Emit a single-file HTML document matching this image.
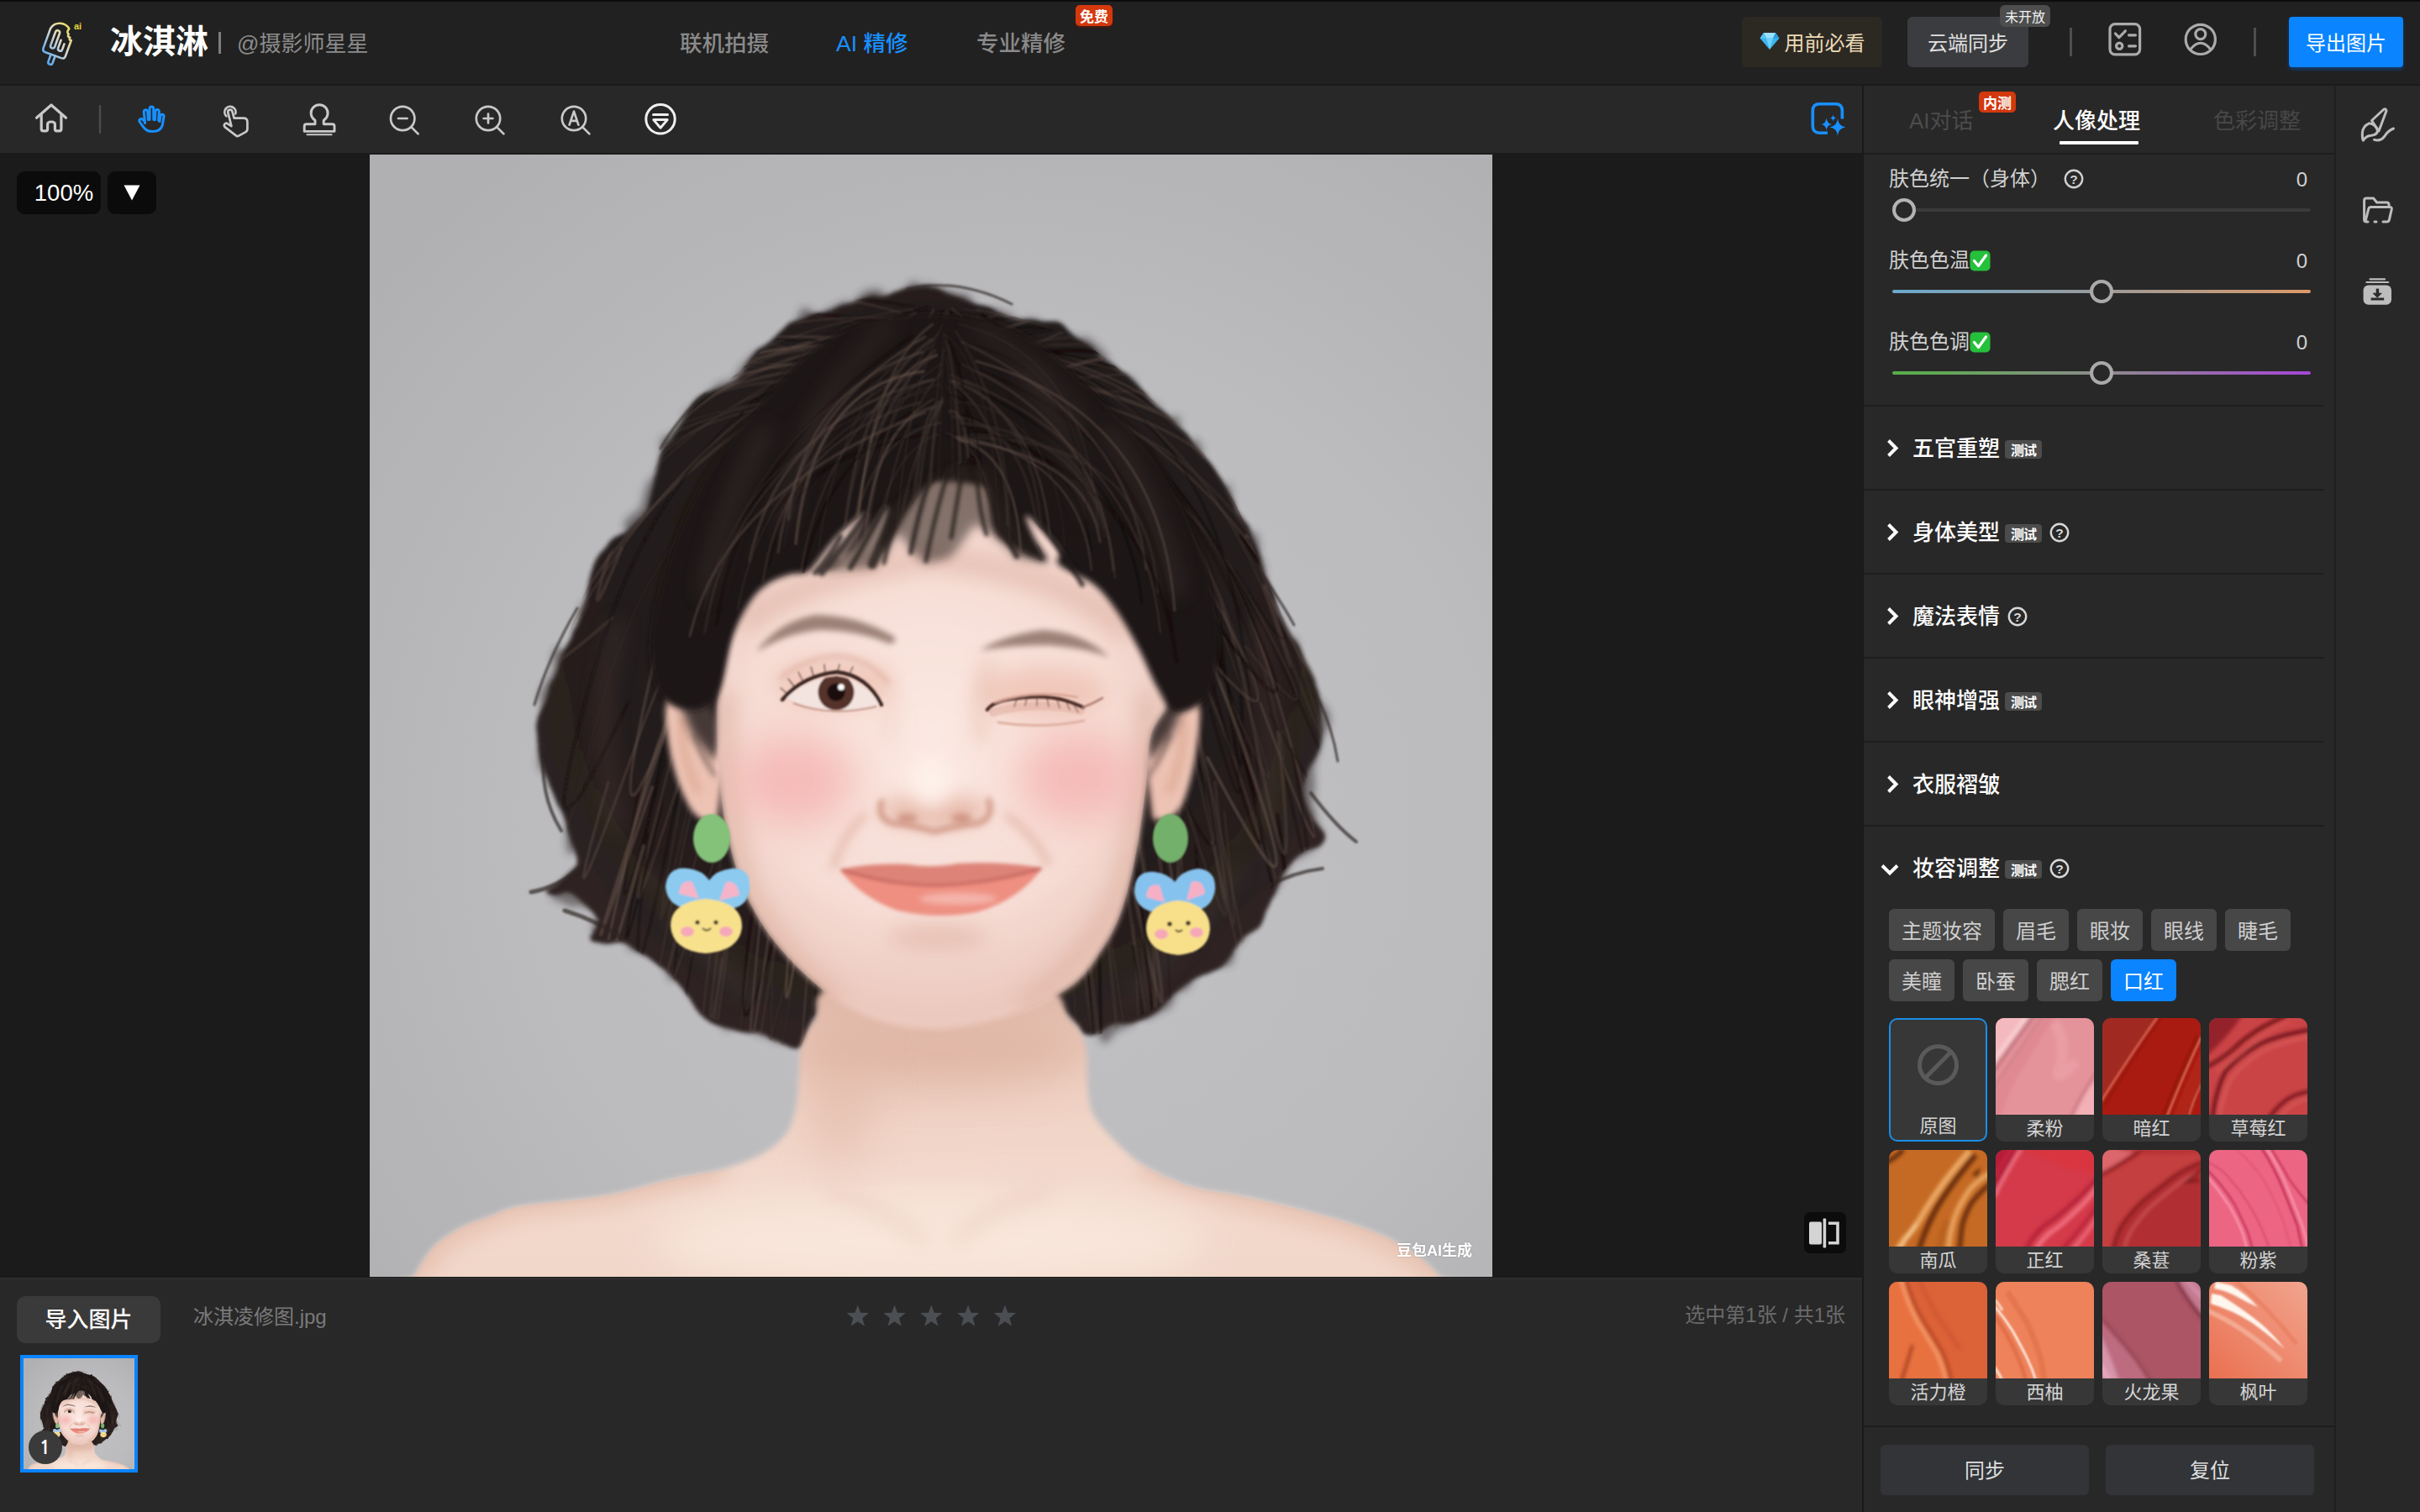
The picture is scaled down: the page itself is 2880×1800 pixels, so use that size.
<!DOCTYPE html>
<html lang="zh-CN">
<head>
<meta charset="utf-8">
<title>冰淇淋 AI 精修</title>
<style>
*{box-sizing:border-box;margin:0;padding:0}
html,body{width:2880px;height:1800px;overflow:hidden;background:#1b1b1b}
body{position:relative;font-family:"Liberation Sans","Noto Sans CJK SC",sans-serif;color:#fff;-webkit-font-smoothing:antialiased}
.abs{position:absolute}
.t{position:absolute;white-space:nowrap;line-height:1}
#topline{left:0;top:0;width:2880px;height:2px;background:#0c0c0c}
#header{left:0;top:2px;width:2880px;height:98px;background:#212121}
#hline{left:0;top:100px;width:2880px;height:2px;background:#1a1a1a}
#toolbar{left:0;top:102px;width:2216px;height:80px;background:#282828}
#canvas{left:0;top:182px;width:2216px;height:1339px;background:#1b1b1b}
#film{left:0;top:1521px;width:2216px;height:279px;background:#282828;border-top:2px solid #2e2e2e}
#pdiv{left:2216px;top:102px;width:2px;height:1698px;background:#1a1a1a}
#panel{left:2218px;top:102px;width:560px;height:1698px;background:#282828}
#sdiv{left:2778px;top:102px;width:2px;height:1698px;background:#1f1f1f}
#side{left:2780px;top:102px;width:100px;height:1698px;background:#282828}
.btn{position:absolute;border-radius:6px;display:flex;align-items:center;justify-content:center;white-space:nowrap}
.chip{position:absolute;height:50px;padding-bottom:2px;border-radius:6px;background:#474747;color:#cfcfcf;font-size:24px;display:flex;align-items:center;justify-content:center;white-space:nowrap}
.chip.on{background:#0a84ff;color:#fff}
.sec{position:absolute;left:2276px;font-size:26px;font-weight:500;color:#fff;white-space:nowrap;line-height:1}
.tag{position:absolute;width:44px;height:22px;border-radius:4px;background:#4c4c4c;color:#fff;font-size:16px;font-weight:700;display:flex;align-items:center;justify-content:center;letter-spacing:-1px;white-space:nowrap}
.divl{position:absolute;left:2218px;width:547px;height:2px;background:#1e1e1e}
.lab{position:absolute;left:2248px;font-size:24px;color:#d0d0d0;white-space:nowrap;line-height:1}
.val{position:absolute;right:134px;font-size:24px;color:#d0d0d0;line-height:1}
.sw{position:absolute;width:117px;height:147px;border-radius:10px;overflow:hidden;background:#373737}
.sw svg{position:absolute;left:0;top:0;width:117px;height:115px;display:block;overflow:hidden}
.sw span{position:absolute;left:0;top:113px;width:117px;height:32px;font-size:22px;color:#d4d4d4;display:flex;align-items:center;justify-content:center;white-space:nowrap}
svg{overflow:visible}
@media (max-width:1500px){html{zoom:.5}}
</style>
</head>
<body>
<div class="abs" id="header"></div>
<div class="abs" id="topline"></div>
<div class="abs" id="hline"></div>
<div class="abs" id="toolbar"></div>
<div class="abs" id="canvas"></div>
<div class="abs" id="film"></div>
<div class="abs" id="panel"></div>
<div class="abs" id="pdiv"></div>
<div class="abs" id="side"></div>
<div class="abs" id="sdiv"></div>

<!-- ===== header ===== -->
<svg class="abs" style="left:40px;top:16px" width="70" height="70" viewBox="40 16 70 70">
  <defs><linearGradient id="lg" gradientUnits="userSpaceOnUse" x1="84" y1="28" x2="52" y2="74">
    <stop offset="0" stop-color="#f2dc4a"/><stop offset="0.45" stop-color="#d8d8d0"/><stop offset="1" stop-color="#3a9cf5"/></linearGradient></defs>
  <g fill="none" stroke="url(#lg)" stroke-width="2.6" stroke-linecap="round" stroke-linejoin="round" transform="rotate(20 67 50)">
    <path d="M76 30 A13 13 0 0 0 55 37 V62 Q55 66 59 66 H79 Q83 66 83 62 V42 Q80 43 80.5 39.5 Q77 40 77.5 36 Q74 35 76 30 Z"/>
    <path d="M62 39 a2.6 2.6 0 0 1 5.2 0 V56 a2.6 2.6 0 0 1 -5.2 0 Z"/>
    <path d="M71.5 46 V56 a2.6 2.6 0 0 0 5.2 0 V49"/>
    <path d="M66 66 V75 a2.7 2.7 0 0 0 5.4 0 V66"/>
  </g>
  <text x="88" y="34.6" font-family="Liberation Sans, sans-serif" font-weight="700" font-size="11" fill="#e8d23c">ai</text>
</svg>
<div class="t" style="left:131px;top:29.5px;font-size:39px;font-weight:700;font-family:'Liberation Sans','Noto Sans CJK SC',sans-serif">冰淇淋</div>
<div class="abs" style="left:260px;top:38px;width:2.5px;height:26px;background:#7d7d7d"></div>
<div class="t" style="left:282px;top:39px;font-size:26px;color:#8c8c8c">@摄影师星星</div>

<div class="t" style="left:809px;top:38.5px;font-size:26.5px;font-weight:500;color:#8a8a8a">联机拍摄</div>
<div class="t" style="left:995px;top:38.5px;font-size:26.5px;font-weight:500;color:#1890ff">AI 精修</div>
<div class="t" style="left:1162px;top:38.5px;font-size:26.5px;font-weight:500;color:#8a8a8a">专业精修</div>
<div class="btn" style="left:1280px;top:6px;width:44px;height:25px;background:#d4380d;font-size:17px;font-weight:700;border-radius:5px;box-shadow:0 2px 3px rgba(120,20,0,.5)">免费</div>

<div class="btn" style="left:2073px;top:20px;width:167px;height:60px;background:#2c2923;color:#ecd9b6;font-size:24px;border-radius:6px;padding-bottom:2px"><svg width="24" height="22" viewBox="0 0 24 22" style="margin-right:6px"><path d="M5 1H19L23.5 7.5L12 21L0.5 7.5Z" fill="#3cb4f0"/><path d="M5 1L8 7.5H16L19 1Z" fill="#9be0ff"/><path d="M8 7.5L12 21L16 7.5Z" fill="#6fd0fa"/><path d="M0.5 7.5H8L5 1Z" fill="#5ac4f5"/><path d="M23.5 7.5H16L19 1Z" fill="#2a9ce0"/></svg>用前必看</div>
<div class="btn" style="left:2270px;top:20px;width:144px;height:60px;background:#3b3c3f;color:#e0e0e0;font-size:24px;border-radius:6px;padding-bottom:2px">云端同步</div>
<div class="btn" style="left:2380px;top:6px;width:60px;height:26px;background:#4d4d4d;color:#f0f0f0;font-size:16px;border-radius:6px">未开放</div>
<div class="abs" style="left:2463px;top:33px;width:3px;height:34px;background:#4e4e4e"></div>
<svg class="abs" style="left:2500px;top:20px" width="60" height="56" viewBox="2500 20 60 56" fill="none" stroke="#ababab" stroke-width="3.2" stroke-linecap="round" stroke-linejoin="round">
  <rect x="2511" y="28.6" width="35.6" height="36.2" rx="6"/>
  <path d="M2517.5 40 L2521.8 44.6 L2529.4 36.8"/><path d="M2533.5 41.8H2541.5"/><circle cx="2522.2" cy="54.8" r="3.6"/><path d="M2533.5 54.8H2541.5"/>
</svg>
<svg class="abs" style="left:2595px;top:22px" width="50" height="50" viewBox="2595 22 50 50" fill="none" stroke="#ababab" stroke-width="3.2" stroke-linecap="round">
  <circle cx="2618.8" cy="46.9" r="17.6"/><circle cx="2618.8" cy="40.6" r="6"/><path d="M2606.6 59 Q2618.8 43.5 2631 59"/>
</svg>
<div class="abs" style="left:2681.5px;top:33px;width:3px;height:34px;background:#4e4e4e"></div>
<div class="btn" style="left:2724px;top:20px;width:136px;height:60px;background:#0a84ff;color:#fff;font-size:24px;border-radius:4px;box-shadow:0 3px 4px rgba(0,90,200,.45);padding-bottom:2px">导出图片</div>

<!-- ===== toolbar ===== -->
<svg class="abs" style="left:30px;top:110px" width="800" height="65" viewBox="30 110 800 65" fill="none" stroke="#c9c9c9" stroke-width="3.2" stroke-linecap="round" stroke-linejoin="round">
  <!-- home -->
  <path d="M43.5 140.2 L61 125 L78.5 140.2"/><path d="M49.2 136.5 V153.5 Q49.2 155.8 51.5 155.8 H54.5 Q56.6 155.8 56.6 153.5 V148 Q56.6 145 61 145 Q65.4 145 65.4 148 V153.5 Q65.4 155.8 67.5 155.8 H70.6 Q72.9 155.8 72.9 153.5 V136.5"/>
  <path d="M119 126 V158" stroke="#4b4b4b" stroke-width="2.4"/>
  <!-- hand -->
  <g stroke="#1890ff" stroke-width="3">
    <path d="M172.6 146.6 L171.2 133.4 a2.25 2.25 0 0 1 4.5 -0.6 L176.4 142.6"/>
    <path d="M178 142.4 L178.1 129.4 a2.3 2.3 0 0 1 4.6 0 L182.8 142.4"/>
    <path d="M184.4 142.8 L184.9 132.6 a2.25 2.25 0 0 1 4.5 0.3 L188.6 143.4"/>
    <path d="M190 144.6 L190.8 138 a2.1 2.1 0 0 1 4.2 0.6 L193.4 148.6 Q191.4 156.6 181.6 156.6 Q174 156.6 170.2 150.6 L166.2 145 a2.3 2.3 0 0 1 3.6 -2.8 L172.4 145"/>
  </g>
  <!-- tap -->
  <g stroke-width="2.7">
    <path d="M269.4 138.2 a6.6 6.6 0 1 1 10.8 -2.8"/>
    <path d="M271.2 133.4 a2.65 2.65 0 0 1 5.2 -0.8 L278.6 140.6 H289.8 Q294.4 140.6 294.4 145.2 V153.2 Q294.4 156 292 157.4 L284.2 161.6 Q282.4 162.6 280.8 161.4 L267.8 151.4 a2.6 2.6 0 0 1 3.2 -4.1 L275.4 150.2 Z"/>
  </g>
  <!-- stamp -->
  <g stroke-width="2.9">
    <path d="M375 143.3 a10 10 0 1 1 10.2 0 V147.8 H395.5 Q398 147.8 398 150.3 V156.4 H362.2 V150.3 Q362.2 147.8 364.7 147.8 H375 Z"/>
    <path d="M365.5 160.3 H394.6" stroke-width="2"/>
  </g>
  <!-- zoom out -->
  <g stroke-width="2.7">
    <circle cx="479.2" cy="141" r="14.2"/><path d="M489.6 151.4 L497.6 159.4"/><path d="M474 141 H484.6"/>
    <circle cx="581" cy="141" r="14.2"/><path d="M591.4 151.4 L599.4 159.4"/><path d="M575.6 141 H586.4 M581 135.6 V146.4"/>
    <circle cx="683" cy="141" r="14.2"/><path d="M693.4 151.4 L701.4 159.4"/><path d="M677.6 148.6 L683 132.6 L688.4 148.6 M679.4 143.8 H686.6"/>
  </g>
  <g stroke="#efefef" stroke-width="3">
    <circle cx="786" cy="141.8" r="17.2"/><path d="M777.5 136.4 H794.5"/><path d="M777.8 142.6 H794.2 L786 152.2 Z"/>
  </g>
</svg>
<svg class="abs" style="left:2150px;top:115px" width="52" height="52" viewBox="2150 115 52 52" fill="none" stroke="#1890ff" stroke-width="3.6" stroke-linecap="butt">
  <path d="M2192.4 141.5 V131.8 Q2192.4 123.7 2184.3 123.7 H2165.4 Q2157.3 123.7 2157.3 131.8 V150.1 Q2157.3 158.2 2165.4 158.2 H2175"/>
  <g fill="#1890ff" stroke="none">
    <path d="M2187 141 Q2188 150.4 2196.5 151.4 Q2188 152.4 2187 161.8 Q2186 152.4 2177.5 151.4 Q2186 150.4 2187 141Z"/>
    <path d="M2173.6 140.6 Q2174.4 147.2 2180 148 Q2174.4 148.8 2173.6 155.6 Q2172.8 148.8 2167.6 148 Q2172.8 147.2 2173.6 140.6Z"/>
    <path d="M2181.6 136.6 Q2182 140 2185.2 140.5 Q2182 141 2181.6 144.4 Q2181.2 141 2178 140.5 Q2181.2 140 2181.6 136.6Z"/>
  </g>
</svg>

<!-- zoom box -->
<div class="btn" style="left:20px;top:204px;width:100px;height:51px;background:#0b0b0b;border-radius:9px;font-size:27.5px;color:#fff;padding-left:12px">100%</div>
<div class="btn" style="left:128px;top:204px;width:58px;height:51px;background:#0b0b0b;border-radius:9px"><svg width="20" height="19" viewBox="0 0 20 19"><path d="M0.5 0.5H19.5L10 18.5Z" fill="#fff"/></svg></div>
<!-- ===== panel tabs ===== -->
<div class="t" style="left:2272px;top:131px;font-size:26px;color:#4c4c4c">AI对话</div>
<div class="btn" style="left:2355px;top:109px;width:44px;height:25px;background:#d4380d;font-size:17px;font-weight:700;border-radius:5px">内测</div>
<div class="t" style="left:2443px;top:131px;font-size:26px;color:#fff;font-weight:500">人像处理</div>
<div class="abs" style="left:2451px;top:168px;width:94px;height:4px;background:#fff;border-radius:1px"></div>
<div class="t" style="left:2634px;top:131px;font-size:26px;color:#474747">色彩调整</div>
<div class="abs" style="left:2218px;top:182px;width:560px;height:2px;background:#1d1d1d"></div>

<!-- sliders -->
<div class="lab" style="top:201px">肤色统一（身体）</div>
<svg class="abs" style="left:2455px;top:200.3px" width="26" height="26" viewBox="0 0 26 26" fill="none" stroke="#d0d0d0" stroke-width="2.4"><circle cx="13" cy="13" r="10.2"/><text x="13" y="18.6" text-anchor="middle" font-size="15.5" font-weight="700" font-family="Liberation Sans, sans-serif" fill="#d0d0d0" stroke="none">?</text></svg>
<div class="val" style="top:202px">0</div>
<div class="abs" style="left:2252px;top:248px;width:498px;height:4px;border-radius:2px;background:#3a3a3a"></div>
<div class="abs" style="left:2252px;top:236px;width:28px;height:28px;border-radius:50%;border:4.5px solid #b4b4b4;background:#282828"></div>

<div class="lab" style="top:298px">肤色色温</div>
<svg class="abs" style="left:2344px;top:298px" width="25" height="25" viewBox="0 0 25 25"><rect x="0.5" y="0.5" width="24" height="24" rx="5" fill="#25c03c"/><path d="M5.5 12.5 L10.5 18.5 L19.5 6" fill="none" stroke="#fff" stroke-width="3.2" stroke-linecap="round" stroke-linejoin="round"/></svg>
<div class="val" style="top:299px">0</div>
<div class="abs" style="left:2252px;top:345px;width:498px;height:4px;border-radius:2px;background:linear-gradient(90deg,#6aa9cc,#9a9a9a 50%,#dd9a68)"></div>
<div class="abs" style="left:2487px;top:333px;width:28px;height:28px;border-radius:50%;border:4.5px solid #aaa;background:#282828"></div>

<div class="lab" style="top:395px">肤色色调</div>
<svg class="abs" style="left:2344px;top:395px" width="25" height="25" viewBox="0 0 25 25"><rect x="0.5" y="0.5" width="24" height="24" rx="5" fill="#25c03c"/><path d="M5.5 12.5 L10.5 18.5 L19.5 6" fill="none" stroke="#fff" stroke-width="3.2" stroke-linecap="round" stroke-linejoin="round"/></svg>
<div class="val" style="top:396px">0</div>
<div class="abs" style="left:2252px;top:442px;width:498px;height:4px;border-radius:2px;background:linear-gradient(90deg,#55b046,#8c8c8c 50%,#a646d6)"></div>
<div class="abs" style="left:2487px;top:430px;width:28px;height:28px;border-radius:50%;border:4.5px solid #aaa;background:#282828"></div>

<!-- sections -->
<div class="divl" style="top:482px"></div>
<div class="divl" style="top:582px"></div>
<div class="divl" style="top:682px"></div>
<div class="divl" style="top:782px"></div>
<div class="divl" style="top:882px"></div>
<div class="divl" style="top:982px"></div>
<svg class="abs" style="left:2236px;top:515px" width="30" height="540" viewBox="2236 515 30 540" fill="none" stroke="#fff" stroke-width="4" stroke-linecap="butt" stroke-linejoin="miter">
  <path d="M2247.5 524.5 L2256.5 533.5 L2247.5 542.5"/>
  <path d="M2247.5 624.5 L2256.5 633.5 L2247.5 642.5"/>
  <path d="M2247.5 724.5 L2256.5 733.5 L2247.5 742.5"/>
  <path d="M2247.5 824.5 L2256.5 833.5 L2247.5 842.5"/>
  <path d="M2247.5 924.5 L2256.5 933.5 L2247.5 942.5"/>
  <path d="M2240 1030.5 L2249 1039.5 L2258 1030.5"/>
</svg>
<div class="sec" style="top:521px">五官重塑</div><div class="tag" style="left:2386px;top:524px">测试</div>
<div class="sec" style="top:621px">身体美型</div><div class="tag" style="left:2386px;top:624px">测试</div>
<svg class="abs" style="left:2438px;top:621px" width="26" height="26" viewBox="0 0 26 26" fill="none" stroke="#d8d8d8" stroke-width="2.4"><circle cx="13" cy="13" r="10.2"/><text x="13" y="18.6" text-anchor="middle" font-size="15.5" font-weight="700" font-family="Liberation Sans, sans-serif" fill="#d8d8d8" stroke="none">?</text></svg>
<div class="sec" style="top:721px">魔法表情</div>
<svg class="abs" style="left:2388px;top:721px" width="26" height="26" viewBox="0 0 26 26" fill="none" stroke="#d8d8d8" stroke-width="2.4"><circle cx="13" cy="13" r="10.2"/><text x="13" y="18.6" text-anchor="middle" font-size="15.5" font-weight="700" font-family="Liberation Sans, sans-serif" fill="#d8d8d8" stroke="none">?</text></svg>
<div class="sec" style="top:821px">眼神增强</div><div class="tag" style="left:2386px;top:824px">测试</div>
<div class="sec" style="top:921px">衣服褶皱</div>
<div class="sec" style="top:1021px">妆容调整</div><div class="tag" style="left:2386px;top:1024px">测试</div>
<svg class="abs" style="left:2438px;top:1021px" width="26" height="26" viewBox="0 0 26 26" fill="none" stroke="#d8d8d8" stroke-width="2.4"><circle cx="13" cy="13" r="10.2"/><text x="13" y="18.6" text-anchor="middle" font-size="15.5" font-weight="700" font-family="Liberation Sans, sans-serif" fill="#d8d8d8" stroke="none">?</text></svg>

<!-- chips -->
<div class="chip" style="left:2248px;top:1082px;width:126px">主题妆容</div>
<div class="chip" style="left:2384px;top:1082px;width:78px">眉毛</div>
<div class="chip" style="left:2472px;top:1082px;width:78px">眼妆</div>
<div class="chip" style="left:2560px;top:1082px;width:78px">眼线</div>
<div class="chip" style="left:2648px;top:1082px;width:78px">睫毛</div>
<div class="chip" style="left:2248px;top:1142px;width:78px">美瞳</div>
<div class="chip" style="left:2336px;top:1142px;width:78px">卧蚕</div>
<div class="chip" style="left:2424px;top:1142px;width:78px">腮红</div>
<div class="chip on" style="left:2512px;top:1142px;width:78px">口红</div>
<!-- ===== swatches ===== -->
<svg width="0" height="0" style="position:absolute"><defs>
  <filter id="b1" filterUnits="userSpaceOnUse" x="-20" y="-20" width="160" height="160"><feGaussianBlur stdDeviation="1"/></filter>
  <filter id="b2" filterUnits="userSpaceOnUse" x="-20" y="-20" width="160" height="160"><feGaussianBlur stdDeviation="2.2"/></filter>
  <filter id="b4" filterUnits="userSpaceOnUse" x="-20" y="-20" width="160" height="160"><feGaussianBlur stdDeviation="4.5"/></filter>
</defs></svg>

<div class="sw" style="left:2248px;top:1212px;border:2px solid #1a8fe8"><svg viewBox="0 0 117 115" style="left:-2px;top:-2px" fill="none" stroke="#5a5a5a" stroke-width="5"><circle cx="58.5" cy="55.8" r="22"/><path d="M43 71.5 L74 40"/></svg><span style="left:-2px;top:108px">原图</span></div>

<div class="sw" style="left:2375px;top:1212px"><svg viewBox="0 0 117 115"><rect width="117" height="115" fill="#e5939b"/>
 <g filter="url(#b2)"><path d="M-5 -5 H46 Q24 28 -5 70Z" fill="#f4b9be"/><path d="M46 -4 Q30 18 18 34 Q8 48 -3 64" stroke="#bf717b" stroke-width="4.5" fill="none"/><path d="M38 -4 Q22 18 10 34 L-4 52" stroke="#fad6d8" stroke-width="3.5" fill="none"/><path d="M56 -4 Q38 24 24 44 Q8 66 -3 84" stroke="#cc7d86" stroke-width="4" fill="none" opacity=".8"/><path d="M-5 120 V92 Q16 60 40 26 L60 -5 H72 Q44 40 26 70 Q12 96 6 120Z" fill="#df8791" opacity=".8"/><path d="M122 68 Q104 92 92 120 H122Z" fill="#f3b0b6"/><path d="M121 64 Q102 90 90 118" stroke="#c6747e" stroke-width="3" fill="none"/><path d="M70 6 Q86 30 76 60 Q70 80 96 52" stroke="#eea6ad" stroke-width="12" fill="none" opacity=".55"/></g></svg><span>柔粉</span></div>

<div class="sw" style="left:2502px;top:1212px"><svg viewBox="0 0 117 115"><rect width="117" height="115" fill="#a91b10"/>
 <g filter="url(#b1)"><path d="M-3 -3 H68 Q36 40 -3 100Z" fill="#a02c22"/><path d="M67 -3 Q36 40 -2 100" stroke="#d9604e" stroke-width="2.4" fill="none"/><path d="M71 -3 Q40 42 2 104" stroke="#8a140c" stroke-width="3" fill="none" opacity=".6"/><path d="M118 22 Q98 64 77 117" stroke="#db7460" stroke-width="2.2" fill="none"/><path d="M113 22 Q93 64 72 117" stroke="#84100a" stroke-width="3.5" fill="none" opacity=".55"/><path d="M118 78 Q108 98 103 117" stroke="#d26c5a" stroke-width="2" fill="none"/><path d="M121 30 Q104 66 84 118 H100 Q108 96 121 72Z" fill="#b4261a" opacity=".7"/></g></svg><span>暗红</span></div>

<div class="sw" style="left:2629px;top:1212px"><svg viewBox="0 0 117 115"><rect width="117" height="115" fill="#ca4446"/>
 <g filter="url(#b2)"><path d="M-4 -4 H40 Q22 24 -4 46Z" fill="#94222a"/><path d="M92 -3 Q52 14 30 36 Q14 50 -3 58" stroke="#6c1116" stroke-width="4.2" fill="none"/><path d="M120 14 Q84 20 62 30 Q36 44 19 64 Q8 86 4 118" stroke="#70131a" stroke-width="4.6" fill="none"/><path d="M120 87 Q104 90 94 96 Q82 104 72 118" stroke="#74151b" stroke-width="4.2" fill="none"/><path d="M120 22 Q88 28 66 38 Q42 52 26 72 Q16 92 12 118" stroke="#de6260" stroke-width="4" fill="none" opacity=".65"/><path d="M121 95 Q106 99 98 104 L84 118" stroke="#dc605e" stroke-width="4" fill="none" opacity=".65"/><path d="M96 4 Q58 20 38 42 L8 64" stroke="#db5c5a" stroke-width="4" fill="none" opacity=".5"/></g></svg><span>草莓红</span></div>

<div class="sw" style="left:2248px;top:1369px"><svg viewBox="0 0 117 115"><rect width="117" height="115" fill="#c56a24"/>
 <g filter="url(#b2)"><path d="M-3 15 Q8 9 17 0" stroke="#5e2a0c" stroke-width="5" fill="none"/><path d="M103 6 Q86 26 74 43 Q60 62 52 78 Q42 98 36 118" stroke="#6f320e" stroke-width="7" fill="none"/><path d="M96 1 Q78 22 65 39 Q50 60 40 77 Q28 98 20 104 L10 118" stroke="#eaa865" stroke-width="7" fill="none"/><path d="M14 118 Q22 102 32 88" stroke="#f8d29c" stroke-width="2.5" fill="none"/><path d="M121 40 Q106 52 97 65 Q90 78 87 91 L84 118" stroke="#6f320e" stroke-width="6" fill="none"/><path d="M121 27 Q104 38 97 46 Q84 64 78 81 Q72 100 71 118" stroke="#e6a05c" stroke-width="6.5" fill="none"/><path d="M100 30 L107 24 L104 33" stroke="#5e2a0c" stroke-width="2.4" fill="none"/><path d="M60 118 Q62 100 70 84" stroke="#b05a1a" stroke-width="8" fill="none" opacity=".6"/></g></svg><span>南瓜</span></div>

<div class="sw" style="left:2375px;top:1369px"><svg viewBox="0 0 117 115"><rect width="117" height="115" fill="#d43a49"/>
 <g filter="url(#b2)"><path d="M30 -3 H120 V30 Q70 20 30 -3Z" fill="#da3440" opacity=".8"/><path d="M-3 -3 H30 Q12 24 -3 52Z" fill="#b61c38"/><path d="M30 -1 Q14 24 -2 56" stroke="#f07486" stroke-width="4" fill="none"/><path d="M20 -3 Q8 14 -3 34" stroke="#c82a44" stroke-width="3" fill="none"/><path d="M120 34 Q106 52 91 64 Q74 80 58 90 Q44 102 36 118" stroke="#b3203a" stroke-width="4.5" fill="none"/><path d="M121 44 Q108 62 94 74 Q78 90 64 99 Q54 108 48 118" stroke="#ee6e7e" stroke-width="6" fill="none"/><path d="M120 68 Q104 92 80 117" stroke="#b5223a" stroke-width="4" fill="none"/><path d="M121 80 Q108 100 92 118" stroke="#ea6878" stroke-width="5" fill="none"/></g></svg><span>正红</span></div>

<div class="sw" style="left:2502px;top:1369px"><svg viewBox="0 0 117 115"><rect width="117" height="115" fill="#c43f3f"/>
 <g filter="url(#b2)"><path d="M-3 -3 H44 Q22 14 -3 28Z" fill="#db666c"/><path d="M47 0 Q24 16 -3 30" stroke="#8a1c22" stroke-width="4" fill="none"/><path d="M120 16 Q98 24 82 36 Q64 50 49 62 Q34 76 24 90 Q17 102 15 118 H120Z" fill="#b12e30"/><path d="M120 14 Q98 22 82 34 Q64 48 49 60 Q34 74 23 90 Q16 102 13 118" stroke="#8a1e22" stroke-width="4.5" fill="none"/><path d="M120 24 Q100 32 86 44 Q68 58 55 70 Q42 84 33 98 Q28 108 26 118" stroke="#d65c5e" stroke-width="3" fill="none" opacity=".8"/><path d="M120 22 L100 38 L116 36" stroke="#78141a" stroke-width="3" fill="none"/><path d="M20 -3 Q60 6 120 0" stroke="#a82a2c" stroke-width="5" fill="none" opacity=".6"/></g></svg><span>桑葚</span></div>

<div class="sw" style="left:2629px;top:1369px"><svg viewBox="0 0 117 115"><rect width="117" height="115" fill="#ec6583"/>
 <g filter="url(#b1)"><path d="M-3 23 Q16 42 30 64 Q40 84 46 98 L52 118" stroke="#c93c62" stroke-width="2.6" fill="none"/><path d="M-3 31 Q12 48 25 68 Q36 88 41 102 L45 118" stroke="#f78fa6" stroke-width="3" fill="none"/><path d="M62 -3 Q78 22 88 47 Q98 72 105 90 L111 118" stroke="#c5365a" stroke-width="2.6" fill="none"/><path d="M68 -3 Q84 22 94 47 Q104 72 111 90 L118 116" stroke="#f68ea5" stroke-width="3" fill="none"/><path d="M73 -3 Q86 18 96 36 Q106 50 120 66" stroke="#cc3e60" stroke-width="2.4" fill="none"/><path d="M-3 14 Q10 20 19 28 Q40 50 56 80 Q66 100 72 118" stroke="#da4d6f" stroke-width="2" fill="none"/><path d="M30 -3 Q50 14 64 34 Q78 58 88 84 L98 118" stroke="#dd5273" stroke-width="1.8" fill="none" opacity=".8"/></g></svg><span>粉紫</span></div>

<div class="sw" style="left:2248px;top:1526px"><svg viewBox="0 0 117 115"><rect width="117" height="115" fill="#dc6238"/>
 <g filter="url(#b2)"><path d="M-3 -3 H20 Q28 26 41 47 Q54 68 63 83 Q70 98 74 118 H-3Z" fill="#e8713f"/><path d="M20 -3 Q28 26 41 47 Q54 68 63 83 Q70 98 74 118" stroke="#ac3f20" stroke-width="3.5" fill="none"/><path d="M14 -3 Q22 26 35 49 Q48 70 57 85 Q64 100 68 118" stroke="#f9a472" stroke-width="3" fill="none"/><path d="M28 75 Q22 96 15 118" stroke="#a23a1c" stroke-width="4.5" fill="none" opacity=".85"/><path d="M36 -3 Q46 24 64 50 Q76 66 84 80" stroke="#c8542f" stroke-width="6" fill="none" opacity=".55"/></g></svg><span>活力橙</span></div>

<div class="sw" style="left:2375px;top:1526px"><svg viewBox="0 0 117 115"><rect width="117" height="115" fill="#ee825a"/>
 <g filter="url(#b1)"><path d="M14 12 Q28 34 37 48 Q50 76 54 94 L58 118" stroke="#dd6e46" stroke-width="7" fill="none" opacity=".6"/><path d="M-3 38 Q12 58 24 84 Q32 102 36 118" stroke="#dc6a42" stroke-width="5" fill="none" opacity=".7"/><path d="M-3 27 Q10 42 20 58 Q30 76 37 90 Q44 104 48 118" stroke="#fff2e8" stroke-width="2.6" fill="none"/><path d="M-3 100 Q4 108 8 118" stroke="#fde4d2" stroke-width="3" fill="none"/><path d="M-3 20 Q4 26 8 34" stroke="#fbd6c0" stroke-width="3" fill="none"/></g></svg><span>西柚</span></div>

<div class="sw" style="left:2502px;top:1526px"><svg viewBox="0 0 117 115"><rect width="117" height="115" fill="#ab5565"/>
 <g filter="url(#b2)"><path d="M-3 40 Q20 66 39 90 L58 118 H-3Z" fill="#bd6c80"/><path d="M-3 62 Q8 84 20 118 H-3Z" fill="#d694aa"/><path d="M-3 42 Q20 68 39 91 L57 118" stroke="#8c3a4a" stroke-width="3" fill="none"/><path d="M90 -3 Q100 16 120 40 V-3Z" fill="#c47a92"/><path d="M88 -3 Q98 18 120 44" stroke="#782a3a" stroke-width="3.6" fill="none"/><path d="M-3 98 L8 118" stroke="#e8acc0" stroke-width="5" fill="none"/><path d="M100 -3 Q108 8 120 20" stroke="#d898ae" stroke-width="3" fill="none"/></g></svg><span>火龙果</span></div>

<div class="sw" style="left:2629px;top:1526px"><svg viewBox="0 0 117 115"><defs><linearGradient id="fy" x1="0" y1="1" x2="1" y2="0"><stop offset="0" stop-color="#ea7050"/><stop offset="1" stop-color="#f2a48e"/></linearGradient></defs><rect width="117" height="115" fill="url(#fy)"/>
 <g filter="url(#b1)"><path d="M-3 34 Q40 52 86 94" stroke="#f7b8a2" stroke-width="6" fill="none" opacity=".7"/><path d="M30 -3 Q70 30 104 74" stroke="#e4704e" stroke-width="5" fill="none" opacity=".45"/><path d="M3 14 L14 16 Q40 32 62 50 Q78 64 90 80 Q70 62 50 48 Q28 34 2 26Z" fill="#fff6ee"/><path d="M8 0 L26 4 Q44 14 58 30 Q44 24 30 16 Q18 10 6 8Z" fill="#fff6ee"/></g></svg><span>枫叶</span></div>

<!-- panel bottom -->
<div class="abs" style="left:2218px;top:1697px;width:560px;height:2px;background:#1d1d1d"></div>
<div class="btn" style="left:2238px;top:1720px;width:248px;height:60px;background:#323438;color:#dedede;font-size:24px;padding-bottom:4px">同步</div>
<div class="btn" style="left:2506px;top:1720px;width:248px;height:60px;background:#323438;color:#dedede;font-size:24px;padding-bottom:4px">复位</div>

<!-- side icons -->
<svg class="abs" style="left:2800px;top:120px" width="60" height="260" viewBox="2800 120 60 260" fill="none" stroke="#bdbdbd" stroke-width="3" stroke-linecap="round" stroke-linejoin="round">
  <path d="M2822.5 143.5 L2836.5 130.5 Q2839.5 128.6 2840 132 L2831 156 Z"/>
  <path d="M2819.5 146.8 Q2812 150 2811.4 158 Q2811 164 2812.4 167.2 Q2816 161.5 2822 161.2 Q2829 160.6 2829.5 155.5 Q2827 147.5 2819.5 146.8Z"/>
  <path d="M2825.6 166.4 Q2833 168.5 2837.6 162.5 Q2841.6 155.6 2848.5 153"/>
  <!-- folder -->
  <path d="M2818 264 H2816.2 Q2813.6 264 2813.6 261.4 V238.6 Q2813.6 236 2816.2 236 H2824.6 L2828.6 241 H2840.4 Q2843 241 2843 243.6 V246.4"/>
  <path d="M2826 264 H2828 M2836 264 H2840.6 Q2842.8 264 2843.4 261.6 L2846.2 249.4 Q2846.8 246.4 2843.8 246.4 H2821.6 Q2819.4 246.4 2818.8 248.6 L2815.4 262"/>
  <!-- download -->
  <rect x="2812.6" y="339.4" width="33.4" height="23.4" rx="6" fill="#bdbdbd" stroke="none"/>
  <path d="M2816.4 336 H2842.2" stroke-width="2.2"/><path d="M2820.6 332.4 H2838" stroke-width="2.2"/>
  <g stroke="#2a2a2a" fill="#2a2a2a"><path d="M2829.4 343.6 V351" stroke-width="3.4" stroke-linecap="butt"/><path d="M2824.6 349.2 H2834.2 L2829.4 354 Z" stroke-width="1"/><path d="M2821.6 356 H2837.2" stroke-width="3" stroke-linecap="butt"/></g>
</svg>

<!-- ===== film strip ===== -->
<div class="btn" style="left:20px;top:1543px;width:171px;height:56px;background:#3a3a3a;border-radius:10px;font-size:26px;font-weight:500;color:#fff;padding-bottom:5px">导入图片</div>
<div class="t" style="left:230px;top:1556px;font-size:24px;color:#7a7a7a">冰淇凌修图.jpg</div>
<svg class="abs" style="left:1000px;top:1550px" width="220" height="34" viewBox="1000 1550 220 34" fill="#4b4e53">
  <path id="st" d="M1020.8 1553.5 l3.4 9.2 9.8 0.4 -7.7 6.1 2.7 9.5 -8.2 -5.5 -8.2 5.5 2.7 -9.5 -7.7 -6.1 9.8 -0.4z"/>
  <use href="#st" x="43.8"/><use href="#st" x="87.6"/><use href="#st" x="131.4"/><use href="#st" x="175.2"/>
</svg>
<div class="t" style="right:684px;top:1554px;font-size:24px;color:#6b6b6b">选中第1张 / 共1张</div>
<div class="abs" style="left:2147px;top:1443px;width:50px;height:49px;background:#0c0c0c;border-radius:7px"></div>
<svg class="abs" style="left:2147px;top:1443px" width="50" height="49" viewBox="0 0 50 49"><rect x="6" y="11.5" width="15" height="27" rx="2" fill="#d4d4d4"/><rect x="22.6" y="7.5" width="3.6" height="35" rx="1" fill="#d4d4d4"/><path d="M29 13.2 H40 V36.8 H29" fill="none" stroke="#d4d4d4" stroke-width="3.6"/></svg>
<!-- ===== portrait ===== -->
<svg width="0" height="0" style="position:absolute">
<defs>
  <radialGradient id="pbg" gradientUnits="userSpaceOnUse" cx="760" cy="800" r="1000"><stop offset="0" stop-color="#c2c2c5"/><stop offset="0.55" stop-color="#bcbcbf"/><stop offset="1" stop-color="#b0b0b3"/></radialGradient>
  <filter id="pf1" filterUnits="userSpaceOnUse" x="-50" y="-50" width="1436" height="1436"><feGaussianBlur stdDeviation="1.2"/></filter>
  <filter id="pf2" filterUnits="userSpaceOnUse" x="-50" y="-50" width="1436" height="1436"><feGaussianBlur stdDeviation="2.2"/></filter>
  <filter id="pf3" filterUnits="userSpaceOnUse" x="-50" y="-50" width="1436" height="1436"><feGaussianBlur stdDeviation="3.5"/></filter>
  <filter id="pf6" filterUnits="userSpaceOnUse" x="-50" y="-50" width="1436" height="1436"><feGaussianBlur stdDeviation="6"/></filter>
  <filter id="pf12" filterUnits="userSpaceOnUse" x="-50" y="-50" width="1436" height="1436"><feGaussianBlur stdDeviation="12"/></filter>
  <filter id="pf25" filterUnits="userSpaceOnUse" x="-50" y="-50" width="1436" height="1436"><feGaussianBlur stdDeviation="25"/></filter>
  <filter id="pfh" filterUnits="userSpaceOnUse" x="-50" y="-50" width="1436" height="1436"><feTurbulence type="fractalNoise" baseFrequency="0.02 0.012" numOctaves="2" seed="7" result="n"/><feDisplacementMap in="SourceGraphic" in2="n" scale="26" xChannelSelector="R" yChannelSelector="G"/><feGaussianBlur stdDeviation="2.4"/></filter>
  <filter id="pfh2" filterUnits="userSpaceOnUse" x="-50" y="-50" width="1436" height="1436"><feTurbulence type="fractalNoise" baseFrequency="0.03 0.02" numOctaves="2" seed="3" result="n"/><feDisplacementMap in="SourceGraphic" in2="n" scale="44" xChannelSelector="R" yChannelSelector="G"/><feGaussianBlur stdDeviation="5"/></filter>
  <linearGradient id="skinneck" gradientUnits="userSpaceOnUse" x1="0" y1="1000" x2="0" y2="1336"><stop offset="0" stop-color="#e0b9a9"/><stop offset="0.3" stop-color="#efd0c2"/><stop offset="0.7" stop-color="#f3dacd"/><stop offset="1" stop-color="#f1d7c9"/></linearGradient>
  <radialGradient id="facegr" gradientUnits="userSpaceOnUse" cx="668" cy="690" r="330"><stop offset="0" stop-color="#fbe8e2"/><stop offset="0.65" stop-color="#f6ddd5"/><stop offset="1" stop-color="#ecc9be"/></radialGradient>
  <radialGradient id="hairgr" gradientUnits="userSpaceOnUse" cx="668" cy="560" r="520"><stop offset="0" stop-color="#1b1515"/><stop offset="0.7" stop-color="#231b1a"/><stop offset="1" stop-color="#2e2422"/></radialGradient>
  <clipPath id="pclip"><rect x="0" y="0" width="1336" height="1336"/></clipPath>
  <clipPath id="bodyclip"><path d="M560.0 990.0 C516.7 996.7 537.7 1018.0 530.0 1030.0 C522.3 1042.0 517.2 1050.3 514.0 1062.0 C510.8 1073.7 512.0 1088.3 511.0 1100.0 C510.0 1111.7 510.5 1121.2 508.0 1132.0 C505.5 1142.8 502.7 1155.5 496.0 1165.0 C489.3 1174.5 480.7 1181.8 468.0 1189.0 C455.3 1196.2 438.0 1202.8 420.0 1208.0 C402.0 1213.2 381.7 1215.0 360.0 1220.0 C338.3 1225.0 312.5 1233.5 290.0 1238.0 C267.5 1242.5 244.2 1244.5 225.0 1247.0 C205.8 1249.5 188.8 1250.0 175.0 1253.0 C161.2 1256.0 153.0 1260.8 142.0 1265.0 C131.0 1269.2 120.0 1272.0 109.0 1278.0 C98.0 1284.0 85.3 1291.3 76.0 1301.0 C66.7 1310.7 59.0 1326.2 53.0 1336.0 C47.0 1345.8 -166.2 1356.0 40.0 1360.0 C246.2 1364.0 1084.5 1364.0 1290.0 1360.0 C1495.5 1356.0 1279.7 1343.7 1273.0 1336.0 C1266.3 1328.3 1259.7 1321.3 1250.0 1314.0 C1240.3 1306.7 1228.3 1298.7 1215.0 1292.0 C1201.7 1285.3 1187.5 1279.8 1170.0 1274.0 C1152.5 1268.2 1132.3 1262.7 1110.0 1257.0 C1087.7 1251.3 1058.2 1244.7 1036.0 1240.0 C1013.8 1235.3 996.3 1235.2 977.0 1229.0 C957.7 1222.8 936.2 1213.3 920.0 1203.0 C903.8 1192.7 890.0 1177.5 880.0 1167.0 C870.0 1156.5 864.3 1149.5 860.0 1140.0 C855.7 1130.5 855.5 1123.7 854.0 1110.0 C852.5 1096.3 854.7 1071.7 851.0 1058.0 C847.3 1044.3 842.2 1039.3 832.0 1028.0 C821.8 1016.7 835.3 996.3 790.0 990.0 C744.7 983.7 603.3 983.3 560.0 990.0Z"/></clipPath>
  <clipPath id="hairclip"><path d="M668.0 157.0 C652.3 155.0 633.7 160.0 618.0 163.0 C602.3 166.0 590.2 169.8 574.0 175.0 C557.8 180.2 537.2 185.7 521.0 194.0 C504.8 202.3 490.2 214.7 477.0 225.0 C463.8 235.3 453.0 246.3 442.0 256.0 C431.0 265.7 421.3 274.2 411.0 283.0 C400.7 291.8 389.7 298.7 380.0 309.0 C370.3 319.3 360.3 333.2 353.0 345.0 C345.7 356.8 340.3 367.5 336.0 380.0 C331.7 392.5 331.5 409.0 327.0 420.0 C322.5 431.0 316.3 436.5 309.0 446.0 C301.7 455.5 291.0 466.0 283.0 477.0 C275.0 488.0 267.0 501.0 261.0 512.0 C255.0 523.0 251.5 531.8 247.0 543.0 C242.5 554.2 238.3 567.2 234.0 579.0 C229.7 590.8 225.3 603.7 221.0 614.0 C216.7 624.3 211.3 632.0 208.0 641.0 C204.7 650.0 201.8 659.0 201.0 668.0 C200.2 677.0 201.2 684.0 203.0 695.0 C204.8 706.0 208.3 721.5 212.0 734.0 C215.7 746.5 220.5 756.7 225.0 770.0 C229.5 783.3 235.3 801.5 239.0 814.0 C242.7 826.5 247.8 837.0 247.0 845.0 C246.2 853.0 239.5 856.2 234.0 862.0 C228.5 867.8 211.8 875.5 214.0 880.0 C216.2 884.5 237.0 884.5 247.0 889.0 C257.0 893.5 271.3 900.0 274.0 907.0 C276.7 914.0 258.7 925.8 263.0 931.0 C267.3 936.2 287.8 933.2 300.0 938.0 C312.2 942.8 324.8 952.0 336.0 960.0 C347.2 968.0 358.2 976.5 367.0 986.0 C375.8 995.5 379.5 1008.8 389.0 1017.0 C398.5 1025.2 411.5 1029.8 424.0 1035.0 C436.5 1040.2 450.0 1043.7 464.0 1048.0 C478.0 1052.3 492.0 1067.3 508.0 1061.0 C524.0 1054.7 511.3 1018.5 560.0 1010.0 C608.7 1001.5 751.0 1004.3 800.0 1010.0 C849.0 1015.7 840.7 1038.3 854.0 1044.0 C867.3 1049.7 869.8 1047.0 880.0 1044.0 C890.2 1041.0 902.5 1032.7 915.0 1026.0 C927.5 1019.3 942.5 1012.2 955.0 1004.0 C967.5 995.8 979.0 985.2 990.0 977.0 C1001.0 968.8 1010.7 963.8 1021.0 955.0 C1031.3 946.2 1044.5 935.0 1052.0 924.0 C1059.5 913.0 1060.8 900.0 1066.0 889.0 C1071.2 878.0 1075.7 867.7 1083.0 858.0 C1090.3 848.3 1100.8 838.0 1110.0 831.0 C1119.2 824.0 1136.5 824.0 1138.0 816.0 C1139.5 808.0 1123.0 794.3 1119.0 783.0 C1115.0 771.7 1112.0 761.3 1114.0 748.0 C1116.0 734.7 1127.5 716.3 1131.0 703.0 C1134.5 689.7 1135.8 679.8 1135.0 668.0 C1134.2 656.2 1130.2 644.0 1126.0 632.0 C1121.8 620.0 1116.0 608.7 1110.0 596.0 C1104.0 583.3 1096.8 570.2 1090.0 556.0 C1083.2 541.8 1075.5 526.0 1069.0 511.0 C1062.5 496.0 1057.0 481.0 1051.0 466.0 C1045.0 451.0 1040.3 436.0 1033.0 421.0 C1025.7 406.0 1016.0 389.7 1007.0 376.0 C998.0 362.3 989.7 351.2 979.0 339.0 C968.3 326.8 955.2 314.8 943.0 303.0 C930.8 291.2 919.2 279.5 906.0 268.0 C892.8 256.5 879.0 244.0 864.0 234.0 C849.0 224.0 834.0 215.3 816.0 208.0 C798.0 200.7 773.3 195.5 756.0 190.0 C738.7 184.5 726.7 180.5 712.0 175.0 C697.3 169.5 683.7 159.0 668.0 157.0Z"/></clipPath>
  <clipPath id="bangclip"><path d="M668.0 190.0 C633.0 190.0 593.0 193.3 560.0 210.0 C527.0 226.7 498.3 258.3 470.0 290.0 C441.7 321.7 410.8 361.7 390.0 400.0 C369.2 438.3 354.2 486.7 345.0 520.0 C335.8 553.3 333.8 578.3 335.0 600.0 C336.2 621.7 342.5 640.0 352.0 650.0 C361.5 660.0 381.3 662.3 392.0 660.0 C402.7 657.7 409.5 650.2 416.0 636.0 C422.5 621.8 424.8 592.3 431.0 575.0 C437.2 557.7 445.8 542.7 453.0 532.0 C460.2 521.3 466.2 516.3 474.0 511.0 C481.8 505.7 492.2 502.3 500.0 500.0 C507.8 497.7 515.0 500.3 521.0 497.0 C527.0 493.7 530.2 487.0 536.0 480.0 C541.8 473.0 549.5 462.0 556.0 455.0 C562.5 448.0 569.3 442.5 575.0 438.0 C580.7 433.5 589.5 425.0 590.0 428.0 C590.5 431.0 583.7 446.0 578.0 456.0 C572.3 466.0 561.5 482.0 556.0 488.0 C550.5 494.0 541.8 495.0 545.0 492.0 C548.2 489.0 565.8 478.7 575.0 470.0 C584.2 461.3 593.2 448.3 600.0 440.0 C606.8 431.7 614.0 419.0 616.0 420.0 C618.0 421.0 613.7 437.5 612.0 446.0 C610.3 454.5 603.8 470.3 606.0 471.0 C608.2 471.7 619.3 457.7 625.0 450.0 C630.7 442.3 634.2 433.3 640.0 425.0 C645.8 416.7 650.5 408.8 660.0 400.0 C669.5 391.2 687.0 378.3 697.0 372.0 C707.0 365.7 713.7 357.3 720.0 362.0 C726.3 366.7 731.2 385.8 735.0 400.0 C738.8 414.2 737.2 435.3 743.0 447.0 C748.8 458.7 759.7 463.8 770.0 470.0 C780.3 476.2 801.7 486.5 805.0 484.0 C808.3 481.5 793.8 464.0 790.0 455.0 C786.2 446.0 777.0 427.5 782.0 430.0 C787.0 432.5 813.7 460.3 820.0 470.0 C826.3 479.7 813.0 481.0 820.0 488.0 C827.0 495.0 850.3 502.5 862.0 512.0 C873.7 521.5 881.0 532.0 890.0 545.0 C899.0 558.0 908.0 574.8 916.0 590.0 C924.0 605.2 930.7 623.7 938.0 636.0 C945.3 648.3 949.7 663.3 960.0 664.0 C970.3 664.7 991.7 657.3 1000.0 640.0 C1008.3 622.7 1011.7 588.3 1010.0 560.0 C1008.3 531.7 1001.7 501.7 990.0 470.0 C978.3 438.3 961.7 401.7 940.0 370.0 C918.3 338.3 888.3 306.7 860.0 280.0 C831.7 253.3 802.0 225.0 770.0 210.0 C738.0 195.0 703.0 190.0 668.0 190.0Z"/></clipPath>
  <clipPath id="eyeclip"><path d="M496 647 Q520 624 556 621 Q588 625 606 654 Q580 663 548 662 Q520 659 496 647Z"/></clipPath>
  <clipPath id="faceclip"><path d="M416.0 636.0 C411.7 662.7 413.7 679.3 414.0 700.0 C414.3 720.7 416.0 741.7 418.0 760.0 C420.0 778.3 422.0 792.2 426.0 810.0 C430.0 827.8 436.0 850.7 442.0 867.0 C448.0 883.3 454.7 895.5 462.0 908.0 C469.3 920.5 476.7 930.7 486.0 942.0 C495.3 953.3 507.0 965.7 518.0 976.0 C529.0 986.3 540.3 996.0 552.0 1004.0 C563.7 1012.0 575.7 1018.7 588.0 1024.0 C600.3 1029.3 612.7 1033.2 626.0 1036.0 C639.3 1038.8 654.0 1040.8 668.0 1041.0 C682.0 1041.2 697.0 1039.0 710.0 1037.0 C723.0 1035.0 734.3 1032.2 746.0 1029.0 C757.7 1025.8 768.7 1022.3 780.0 1018.0 C791.3 1013.7 803.2 1009.0 814.0 1003.0 C824.8 997.0 836.0 990.5 845.0 982.0 C854.0 973.5 860.7 963.2 868.0 952.0 C875.3 940.8 883.0 929.0 889.0 915.0 C895.0 901.0 899.7 884.8 904.0 868.0 C908.3 851.2 911.7 833.7 915.0 814.0 C918.3 794.3 921.5 770.7 924.0 750.0 C926.5 729.3 924.5 709.0 930.0 690.0 C935.5 671.0 955.3 657.7 957.0 636.0 C958.7 614.3 949.5 586.0 940.0 560.0 C930.5 534.0 920.0 503.3 900.0 480.0 C880.0 456.7 853.3 435.0 820.0 420.0 C786.7 405.0 736.7 393.3 700.0 390.0 C663.3 386.7 633.3 390.0 600.0 400.0 C566.7 410.0 526.7 426.7 500.0 450.0 C473.3 473.3 454.0 509.0 440.0 540.0 C426.0 571.0 420.3 609.3 416.0 636.0Z"/></clipPath>
  <symbol id="portrait" viewBox="0 0 1336 1336">
  <g clip-path="url(#pclip)">
    <rect width="1336" height="1336" fill="url(#pbg)"/>
    <!-- back hair -->
    <path d="M668.0 157.0 C652.3 155.0 633.7 160.0 618.0 163.0 C602.3 166.0 590.2 169.8 574.0 175.0 C557.8 180.2 537.2 185.7 521.0 194.0 C504.8 202.3 490.2 214.7 477.0 225.0 C463.8 235.3 453.0 246.3 442.0 256.0 C431.0 265.7 421.3 274.2 411.0 283.0 C400.7 291.8 389.7 298.7 380.0 309.0 C370.3 319.3 360.3 333.2 353.0 345.0 C345.7 356.8 340.3 367.5 336.0 380.0 C331.7 392.5 331.5 409.0 327.0 420.0 C322.5 431.0 316.3 436.5 309.0 446.0 C301.7 455.5 291.0 466.0 283.0 477.0 C275.0 488.0 267.0 501.0 261.0 512.0 C255.0 523.0 251.5 531.8 247.0 543.0 C242.5 554.2 238.3 567.2 234.0 579.0 C229.7 590.8 225.3 603.7 221.0 614.0 C216.7 624.3 211.3 632.0 208.0 641.0 C204.7 650.0 201.8 659.0 201.0 668.0 C200.2 677.0 201.2 684.0 203.0 695.0 C204.8 706.0 208.3 721.5 212.0 734.0 C215.7 746.5 220.5 756.7 225.0 770.0 C229.5 783.3 235.3 801.5 239.0 814.0 C242.7 826.5 247.8 837.0 247.0 845.0 C246.2 853.0 239.5 856.2 234.0 862.0 C228.5 867.8 211.8 875.5 214.0 880.0 C216.2 884.5 237.0 884.5 247.0 889.0 C257.0 893.5 271.3 900.0 274.0 907.0 C276.7 914.0 258.7 925.8 263.0 931.0 C267.3 936.2 287.8 933.2 300.0 938.0 C312.2 942.8 324.8 952.0 336.0 960.0 C347.2 968.0 358.2 976.5 367.0 986.0 C375.8 995.5 379.5 1008.8 389.0 1017.0 C398.5 1025.2 411.5 1029.8 424.0 1035.0 C436.5 1040.2 450.0 1043.7 464.0 1048.0 C478.0 1052.3 492.0 1067.3 508.0 1061.0 C524.0 1054.7 511.3 1018.5 560.0 1010.0 C608.7 1001.5 751.0 1004.3 800.0 1010.0 C849.0 1015.7 840.7 1038.3 854.0 1044.0 C867.3 1049.7 869.8 1047.0 880.0 1044.0 C890.2 1041.0 902.5 1032.7 915.0 1026.0 C927.5 1019.3 942.5 1012.2 955.0 1004.0 C967.5 995.8 979.0 985.2 990.0 977.0 C1001.0 968.8 1010.7 963.8 1021.0 955.0 C1031.3 946.2 1044.5 935.0 1052.0 924.0 C1059.5 913.0 1060.8 900.0 1066.0 889.0 C1071.2 878.0 1075.7 867.7 1083.0 858.0 C1090.3 848.3 1100.8 838.0 1110.0 831.0 C1119.2 824.0 1136.5 824.0 1138.0 816.0 C1139.5 808.0 1123.0 794.3 1119.0 783.0 C1115.0 771.7 1112.0 761.3 1114.0 748.0 C1116.0 734.7 1127.5 716.3 1131.0 703.0 C1134.5 689.7 1135.8 679.8 1135.0 668.0 C1134.2 656.2 1130.2 644.0 1126.0 632.0 C1121.8 620.0 1116.0 608.7 1110.0 596.0 C1104.0 583.3 1096.8 570.2 1090.0 556.0 C1083.2 541.8 1075.5 526.0 1069.0 511.0 C1062.5 496.0 1057.0 481.0 1051.0 466.0 C1045.0 451.0 1040.3 436.0 1033.0 421.0 C1025.7 406.0 1016.0 389.7 1007.0 376.0 C998.0 362.3 989.7 351.2 979.0 339.0 C968.3 326.8 955.2 314.8 943.0 303.0 C930.8 291.2 919.2 279.5 906.0 268.0 C892.8 256.5 879.0 244.0 864.0 234.0 C849.0 224.0 834.0 215.3 816.0 208.0 C798.0 200.7 773.3 195.5 756.0 190.0 C738.7 184.5 726.7 180.5 712.0 175.0 C697.3 169.5 683.7 159.0 668.0 157.0Z" fill="#2a2120" opacity=".5" filter="url(#pfh2)"/>
    <path d="M668.0 157.0 C652.3 155.0 633.7 160.0 618.0 163.0 C602.3 166.0 590.2 169.8 574.0 175.0 C557.8 180.2 537.2 185.7 521.0 194.0 C504.8 202.3 490.2 214.7 477.0 225.0 C463.8 235.3 453.0 246.3 442.0 256.0 C431.0 265.7 421.3 274.2 411.0 283.0 C400.7 291.8 389.7 298.7 380.0 309.0 C370.3 319.3 360.3 333.2 353.0 345.0 C345.7 356.8 340.3 367.5 336.0 380.0 C331.7 392.5 331.5 409.0 327.0 420.0 C322.5 431.0 316.3 436.5 309.0 446.0 C301.7 455.5 291.0 466.0 283.0 477.0 C275.0 488.0 267.0 501.0 261.0 512.0 C255.0 523.0 251.5 531.8 247.0 543.0 C242.5 554.2 238.3 567.2 234.0 579.0 C229.7 590.8 225.3 603.7 221.0 614.0 C216.7 624.3 211.3 632.0 208.0 641.0 C204.7 650.0 201.8 659.0 201.0 668.0 C200.2 677.0 201.2 684.0 203.0 695.0 C204.8 706.0 208.3 721.5 212.0 734.0 C215.7 746.5 220.5 756.7 225.0 770.0 C229.5 783.3 235.3 801.5 239.0 814.0 C242.7 826.5 247.8 837.0 247.0 845.0 C246.2 853.0 239.5 856.2 234.0 862.0 C228.5 867.8 211.8 875.5 214.0 880.0 C216.2 884.5 237.0 884.5 247.0 889.0 C257.0 893.5 271.3 900.0 274.0 907.0 C276.7 914.0 258.7 925.8 263.0 931.0 C267.3 936.2 287.8 933.2 300.0 938.0 C312.2 942.8 324.8 952.0 336.0 960.0 C347.2 968.0 358.2 976.5 367.0 986.0 C375.8 995.5 379.5 1008.8 389.0 1017.0 C398.5 1025.2 411.5 1029.8 424.0 1035.0 C436.5 1040.2 450.0 1043.7 464.0 1048.0 C478.0 1052.3 492.0 1067.3 508.0 1061.0 C524.0 1054.7 511.3 1018.5 560.0 1010.0 C608.7 1001.5 751.0 1004.3 800.0 1010.0 C849.0 1015.7 840.7 1038.3 854.0 1044.0 C867.3 1049.7 869.8 1047.0 880.0 1044.0 C890.2 1041.0 902.5 1032.7 915.0 1026.0 C927.5 1019.3 942.5 1012.2 955.0 1004.0 C967.5 995.8 979.0 985.2 990.0 977.0 C1001.0 968.8 1010.7 963.8 1021.0 955.0 C1031.3 946.2 1044.5 935.0 1052.0 924.0 C1059.5 913.0 1060.8 900.0 1066.0 889.0 C1071.2 878.0 1075.7 867.7 1083.0 858.0 C1090.3 848.3 1100.8 838.0 1110.0 831.0 C1119.2 824.0 1136.5 824.0 1138.0 816.0 C1139.5 808.0 1123.0 794.3 1119.0 783.0 C1115.0 771.7 1112.0 761.3 1114.0 748.0 C1116.0 734.7 1127.5 716.3 1131.0 703.0 C1134.5 689.7 1135.8 679.8 1135.0 668.0 C1134.2 656.2 1130.2 644.0 1126.0 632.0 C1121.8 620.0 1116.0 608.7 1110.0 596.0 C1104.0 583.3 1096.8 570.2 1090.0 556.0 C1083.2 541.8 1075.5 526.0 1069.0 511.0 C1062.5 496.0 1057.0 481.0 1051.0 466.0 C1045.0 451.0 1040.3 436.0 1033.0 421.0 C1025.7 406.0 1016.0 389.7 1007.0 376.0 C998.0 362.3 989.7 351.2 979.0 339.0 C968.3 326.8 955.2 314.8 943.0 303.0 C930.8 291.2 919.2 279.5 906.0 268.0 C892.8 256.5 879.0 244.0 864.0 234.0 C849.0 224.0 834.0 215.3 816.0 208.0 C798.0 200.7 773.3 195.5 756.0 190.0 C738.7 184.5 726.7 180.5 712.0 175.0 C697.3 169.5 683.7 159.0 668.0 157.0Z" fill="url(#hairgr)" filter="url(#pfh)"/>
    <g clip-path="url(#hairclip)"><g fill="none" stroke-linecap="round" filter="url(#pf1)">
      <path d="M693 240 Q728 535 743 1032 T754 1082" stroke="#3d312d" stroke-width="1.5" opacity="0.30"/>
      <path d="M682 226 Q626 485 602 979 T612 1030" stroke="#4d3f39" stroke-width="1.4" opacity="0.32"/>
      <path d="M716 281 Q931 368 977 656 T990 689" stroke="#120d0d" stroke-width="2.0" opacity="0.60"/>
      <path d="M674 213 Q348 242 242 448 T270 477" stroke="#0e0a0a" stroke-width="4.1" opacity="0.25"/>
      <path d="M696 226 Q977 299 1078 639 T1060 653" stroke="#6a574d" stroke-width="2.2" opacity="0.52"/>
      <path d="M705 275 Q980 209 1066 330 T1041 376" stroke="#0e0a0a" stroke-width="1.6" opacity="0.38"/>
      <path d="M703 297 Q827 515 847 817 T822 877" stroke="#120d0d" stroke-width="3.0" opacity="0.29"/>
      <path d="M663 218 Q423 268 276 420 T282 442" stroke="#3d312d" stroke-width="3.0" opacity="0.47"/>
      <path d="M726 225 Q981 242 1097 393 T1106 439" stroke="#0e0a0a" stroke-width="1.7" opacity="0.58"/>
      <path d="M698 229 Q934 270 1092 621 T1071 666" stroke="#120d0d" stroke-width="2.0" opacity="0.42"/>
      <path d="M683 236 Q651 581 633 1024 T610 1080" stroke="#4d3f39" stroke-width="3.4" opacity="0.34"/>
      <path d="M690 248 Q732 399 744 844 T782 887" stroke="#120d0d" stroke-width="3.3" opacity="0.58"/>
      <path d="M682 216 Q567 504 516 890 T482 916" stroke="#4d3f39" stroke-width="1.6" opacity="0.28"/>
      <path d="M679 264 Q614 575 592 1051 T607 1107" stroke="#6a574d" stroke-width="3.8" opacity="0.58"/>
      <path d="M694 224 Q941 240 1094 358 T1063 381" stroke="#3d312d" stroke-width="2.4" opacity="0.39"/>
      <path d="M649 188 Q461 348 337 732 T336 753" stroke="#6a574d" stroke-width="3.3" opacity="0.52"/>
      <path d="M663 195 Q497 417 432 900 T419 957" stroke="#5a4a42" stroke-width="2.7" opacity="0.36"/>
      <path d="M658 290 Q505 454 441 839 T426 855" stroke="#4d3f39" stroke-width="2.7" opacity="0.50"/>
      <path d="M666 212 Q383 141 261 301 T261 327" stroke="#120d0d" stroke-width="3.7" opacity="0.41"/>
      <path d="M725 264 Q959 118 1051 241 T1013 257" stroke="#4d3f39" stroke-width="2.6" opacity="0.52"/>
      <path d="M695 192 Q924 381 1012 804 T1002 818" stroke="#6a574d" stroke-width="1.8" opacity="0.34"/>
      <path d="M651 206 Q433 305 348 713 T348 772" stroke="#0e0a0a" stroke-width="1.7" opacity="0.57"/>
      <path d="M727 233 Q1064 172 1140 281 T1146 335" stroke="#3d312d" stroke-width="3.6" opacity="0.41"/>
      <path d="M663 256 Q529 439 458 918 T497 977" stroke="#3d312d" stroke-width="2.8" opacity="0.34"/>
      <path d="M664 220 Q482 310 396 700 T373 754" stroke="#4d3f39" stroke-width="2.5" opacity="0.31"/>
      <path d="M712 241 Q890 359 927 723 T963 758" stroke="#4d3f39" stroke-width="4.0" opacity="0.52"/>
      <path d="M692 198 Q756 534 763 1012 T777 1069" stroke="#120d0d" stroke-width="3.8" opacity="0.32"/>
      <path d="M651 203 Q345 224 212 470 T174 528" stroke="#6a574d" stroke-width="2.7" opacity="0.44"/>
      <path d="M657 292 Q342 188 285 357 T277 380" stroke="#3d312d" stroke-width="2.7" opacity="0.40"/>
      <path d="M648 201 Q323 307 239 524 T261 535" stroke="#5a4a42" stroke-width="1.8" opacity="0.25"/>
      <path d="M714 239 Q939 356 988 702 T1006 747" stroke="#4d3f39" stroke-width="3.8" opacity="0.38"/>
      <path d="M700 255 Q780 389 802 807 T811 860" stroke="#0e0a0a" stroke-width="1.9" opacity="0.47"/>
      <path d="M710 202 Q825 499 878 899 T909 916" stroke="#6a574d" stroke-width="1.5" opacity="0.28"/>
      <path d="M645 227 Q420 298 273 496 T288 552" stroke="#4d3f39" stroke-width="4.1" opacity="0.50"/>
      <path d="M672 276 Q553 507 473 1000 T482 1056" stroke="#5a4a42" stroke-width="2.6" opacity="0.31"/>
      <path d="M694 190 Q1005 340 1077 681 T1098 707" stroke="#120d0d" stroke-width="2.6" opacity="0.37"/>
      <path d="M710 202 Q937 304 1031 574 T1065 615" stroke="#4d3f39" stroke-width="1.5" opacity="0.36"/>
      <path d="M726 293 Q988 210 1131 347 T1119 395" stroke="#4d3f39" stroke-width="2.0" opacity="0.51"/>
      <path d="M651 285 Q365 335 277 649 T269 695" stroke="#3d312d" stroke-width="1.4" opacity="0.36"/>
      <path d="M706 184 Q1055 213 1134 395 T1111 425" stroke="#4d3f39" stroke-width="1.7" opacity="0.39"/>
      <path d="M680 298 Q360 254 238 468 T218 499" stroke="#5a4a42" stroke-width="1.4" opacity="0.48"/>
      <path d="M716 244 Q980 171 1065 382 T1033 414" stroke="#120d0d" stroke-width="3.1" opacity="0.46"/>
      <path d="M673 236 Q442 351 357 694 T321 751" stroke="#120d0d" stroke-width="2.5" opacity="0.39"/>
      <path d="M715 291 Q901 487 941 769 T963 808" stroke="#6a574d" stroke-width="3.1" opacity="0.51"/>
      <path d="M711 299 Q800 453 851 906 T846 939" stroke="#5a4a42" stroke-width="4.1" opacity="0.27"/>
      <path d="M709 295 Q1028 260 1126 317 T1120 333" stroke="#3d312d" stroke-width="3.8" opacity="0.43"/>
      <path d="M723 210 Q983 175 1084 406 T1086 466" stroke="#0e0a0a" stroke-width="4.1" opacity="0.30"/>
      <path d="M690 281 Q701 463 698 898 T714 918" stroke="#5a4a42" stroke-width="2.0" opacity="0.32"/>
      <path d="M693 183 Q923 388 1047 775 T1056 790" stroke="#4d3f39" stroke-width="2.8" opacity="0.51"/>
      <path d="M660 237 Q393 194 273 350 T243 403" stroke="#6a574d" stroke-width="3.6" opacity="0.53"/>
      <path d="M663 209 Q533 390 469 808 T508 835" stroke="#0e0a0a" stroke-width="2.8" opacity="0.54"/>
      <path d="M719 218 Q973 274 1075 546 T1100 580" stroke="#4d3f39" stroke-width="3.7" opacity="0.28"/>
      <path d="M726 266 Q949 345 1054 539 T1042 585" stroke="#4d3f39" stroke-width="2.3" opacity="0.36"/>
      <path d="M693 212 Q757 531 762 1041 T739 1099" stroke="#120d0d" stroke-width="3.4" opacity="0.34"/>
      <path d="M695 225 Q828 388 869 822 T872 874" stroke="#5a4a42" stroke-width="2.9" opacity="0.28"/>
      <path d="M687 185 Q727 542 745 984 T772 1015" stroke="#3d312d" stroke-width="2.9" opacity="0.53"/>
      <path d="M725 188 Q945 136 1056 342 T1067 364" stroke="#120d0d" stroke-width="1.9" opacity="0.37"/>
      <path d="M690 195 Q728 546 730 995 T739 1008" stroke="#0e0a0a" stroke-width="3.5" opacity="0.37"/>
      <path d="M696 244 Q959 280 1074 398 T1043 454" stroke="#5a4a42" stroke-width="3.9" opacity="0.51"/>
      <path d="M663 230 Q328 252 260 368 T245 384" stroke="#5a4a42" stroke-width="3.1" opacity="0.57"/>
      <path d="M671 216 Q457 348 364 700 T372 734" stroke="#6a574d" stroke-width="2.7" opacity="0.31"/>
      <path d="M723 245 Q900 434 952 766 T983 822" stroke="#120d0d" stroke-width="2.2" opacity="0.52"/>
      <path d="M734 194 Q1070 110 1133 296 T1154 346" stroke="#5a4a42" stroke-width="1.4" opacity="0.56"/>
      <path d="M634 229 Q341 172 208 381 T179 436" stroke="#5a4a42" stroke-width="3.6" opacity="0.47"/>
      <path d="M680 272 Q357 188 272 387 T297 401" stroke="#0e0a0a" stroke-width="2.0" opacity="0.43"/>
      <path d="M653 244 Q397 247 224 375 T199 419" stroke="#6a574d" stroke-width="3.5" opacity="0.32"/>
      <path d="M682 216 Q633 474 600 885 T597 931" stroke="#0e0a0a" stroke-width="2.3" opacity="0.30"/>
      <path d="M667 193 Q467 419 411 896 T409 921" stroke="#4d3f39" stroke-width="1.5" opacity="0.55"/>
      <path d="M633 255 Q327 210 238 475 T259 513" stroke="#5a4a42" stroke-width="1.5" opacity="0.32"/>
      <path d="M669 266 Q423 479 360 794 T331 809" stroke="#0e0a0a" stroke-width="3.2" opacity="0.31"/>
      <path d="M693 190 Q978 292 1013 577 T1035 604" stroke="#120d0d" stroke-width="3.7" opacity="0.30"/>
      <path d="M724 290 Q968 337 1015 610 T1000 660" stroke="#120d0d" stroke-width="1.9" opacity="0.44"/>
      <path d="M701 246 Q893 382 973 668 T941 713" stroke="#120d0d" stroke-width="2.0" opacity="0.57"/>
      <path d="M677 265 Q620 458 595 902 T622 922" stroke="#0e0a0a" stroke-width="4.0" opacity="0.48"/>
      <path d="M675 219 Q397 346 335 618 T366 651" stroke="#5a4a42" stroke-width="3.4" opacity="0.57"/>
      <path d="M679 289 Q620 497 599 930 T569 981" stroke="#3d312d" stroke-width="2.1" opacity="0.33"/>
      <path d="M682 187 Q598 361 545 852 T581 895" stroke="#0e0a0a" stroke-width="2.1" opacity="0.55"/>
      <path d="M655 197 Q399 172 228 353 T198 384" stroke="#5a4a42" stroke-width="2.2" opacity="0.34"/>
      <path d="M683 260 Q592 476 567 916 T564 946" stroke="#0e0a0a" stroke-width="3.1" opacity="0.45"/>
      <path d="M703 288 Q794 586 804 991 T773 1048" stroke="#120d0d" stroke-width="2.2" opacity="0.40"/>
      <path d="M643 288 Q351 185 258 342 T242 381" stroke="#4d3f39" stroke-width="1.4" opacity="0.55"/>
      <path d="M729 191 Q963 343 1045 732 T1080 786" stroke="#0e0a0a" stroke-width="4.2" opacity="0.59"/>
      <path d="M659 205 Q476 373 403 837 T371 886" stroke="#120d0d" stroke-width="1.6" opacity="0.45"/>
      <path d="M690 199 Q728 469 737 946 T709 991" stroke="#3d312d" stroke-width="1.9" opacity="0.26"/>
      <path d="M656 297 Q398 266 260 385 T294 440" stroke="#3d312d" stroke-width="1.8" opacity="0.56"/>
      <path d="M707 243 Q1037 169 1103 409 T1115 434" stroke="#3d312d" stroke-width="3.7" opacity="0.55"/>
      <path d="M678 232 Q491 451 392 823 T409 843" stroke="#5a4a42" stroke-width="1.7" opacity="0.43"/>
      <path d="M708 192 Q919 359 944 821 T919 842" stroke="#0e0a0a" stroke-width="1.6" opacity="0.28"/>
      <path d="M646 184 Q381 220 251 396 T276 411" stroke="#5a4a42" stroke-width="2.1" opacity="0.34"/>
      <path d="M696 299 Q901 379 981 720 T972 777" stroke="#5a4a42" stroke-width="2.7" opacity="0.27"/>
      <path d="M665 182 Q363 277 270 603 T308 651" stroke="#120d0d" stroke-width="2.8" opacity="0.52"/>
      <path d="M734 272 Q1020 304 1082 472 T1081 493" stroke="#6a574d" stroke-width="2.9" opacity="0.34"/>
      <path d="M710 285 Q989 294 1089 529 T1114 564" stroke="#4d3f39" stroke-width="3.4" opacity="0.28"/>
      <path d="M670 207 Q380 234 233 352 T218 393" stroke="#3d312d" stroke-width="2.8" opacity="0.52"/>
      <path d="M685 208 Q679 461 671 937 T667 962" stroke="#0e0a0a" stroke-width="2.6" opacity="0.33"/>
      <path d="M673 298 Q396 212 288 385 T251 407" stroke="#5a4a42" stroke-width="3.9" opacity="0.28"/>
      <path d="M678 261 Q602 555 581 1076 T565 1092" stroke="#6a574d" stroke-width="3.8" opacity="0.41"/>
      <path d="M677 253 Q384 164 252 311 T216 338" stroke="#120d0d" stroke-width="3.3" opacity="0.57"/>
      <path d="M696 224 Q972 313 1098 542 T1121 592" stroke="#6a574d" stroke-width="2.6" opacity="0.33"/>
      <path d="M694 261 Q712 531 716 972 T682 1017" stroke="#3d312d" stroke-width="2.3" opacity="0.47"/>
      <path d="M686 257 Q658 558 637 952 T655 1001" stroke="#5a4a42" stroke-width="1.6" opacity="0.50"/>
      <path d="M631 188 Q387 117 287 311 T289 324" stroke="#5a4a42" stroke-width="2.4" opacity="0.42"/>
      <path d="M716 228 Q987 255 1059 487 T1063 513" stroke="#6a574d" stroke-width="2.6" opacity="0.30"/>
      <path d="M733 225 Q935 340 1027 604 T1014 625" stroke="#4d3f39" stroke-width="1.3" opacity="0.51"/>
      <path d="M688 259 Q698 536 692 1028 T680 1044" stroke="#3d312d" stroke-width="3.5" opacity="0.33"/>
      <path d="M671 185 Q546 414 487 842 T470 860" stroke="#6a574d" stroke-width="2.4" opacity="0.52"/>
      <path d="M714 289 Q853 510 901 873 T930 898" stroke="#6a574d" stroke-width="3.9" opacity="0.29"/>
      <path d="M665 281 Q320 146 198 303 T164 315" stroke="#3d312d" stroke-width="2.2" opacity="0.45"/>
      <path d="M731 253 Q928 344 1009 653 T1044 702" stroke="#120d0d" stroke-width="3.1" opacity="0.44"/>
      <path d="M663 233 Q557 375 514 790 T528 814" stroke="#6a574d" stroke-width="2.7" opacity="0.59"/>
      <path d="M693 207 Q962 246 1050 460 T1029 495" stroke="#120d0d" stroke-width="3.2" opacity="0.28"/>
      <path d="M673 210 Q415 253 235 570 T212 599" stroke="#5a4a42" stroke-width="1.7" opacity="0.54"/>
      <path d="M707 223 Q1005 253 1086 491 T1065 513" stroke="#5a4a42" stroke-width="2.2" opacity="0.57"/>
      <path d="M670 286 Q396 447 312 811 T326 823" stroke="#6a574d" stroke-width="3.1" opacity="0.55"/>
      <path d="M731 226 Q967 152 1073 329 T1059 356" stroke="#120d0d" stroke-width="3.5" opacity="0.54"/>
      <path d="M676 279 Q608 546 565 984 T579 1005" stroke="#4d3f39" stroke-width="1.8" opacity="0.42"/>
      <path d="M672 211 Q452 439 370 840 T385 857" stroke="#4d3f39" stroke-width="1.7" opacity="0.55"/>
      <path d="M735 227 Q999 269 1041 596 T1015 609" stroke="#0e0a0a" stroke-width="2.5" opacity="0.35"/>
      <path d="M703 226 Q807 474 838 995 T810 1014" stroke="#3d312d" stroke-width="1.5" opacity="0.56"/>
      <path d="M692 247 Q748 542 764 993 T730 1014" stroke="#120d0d" stroke-width="2.9" opacity="0.27"/>
      <path d="M718 200 Q1067 154 1137 237 T1167 271" stroke="#120d0d" stroke-width="2.4" opacity="0.39"/>
      <path d="M742 212 Q1049 99 1103 305 T1098 357" stroke="#5a4a42" stroke-width="3.4" opacity="0.55"/>
      <path d="M647 181 Q395 134 235 279 T266 293" stroke="#120d0d" stroke-width="2.3" opacity="0.34"/>
      <path d="M721 243 Q980 316 1046 654 T1081 688" stroke="#6a574d" stroke-width="3.7" opacity="0.34"/>
      <path d="M659 225 Q367 123 287 296 T276 338" stroke="#3d312d" stroke-width="2.3" opacity="0.27"/>
      <path d="M679 200 Q529 407 435 768 T412 795" stroke="#3d312d" stroke-width="1.7" opacity="0.37"/>
      <path d="M695 217 Q763 502 763 915 T793 941" stroke="#4d3f39" stroke-width="3.5" opacity="0.45"/>
      <path d="M721 273 Q897 533 927 890 T918 946" stroke="#3d312d" stroke-width="3.8" opacity="0.43"/>
      <path d="M723 185 Q990 227 1111 454 T1128 485" stroke="#4d3f39" stroke-width="4.1" opacity="0.29"/>
      <path d="M662 280 Q432 381 321 691 T284 747" stroke="#6a574d" stroke-width="2.8" opacity="0.41"/>
      <path d="M666 235 Q556 526 521 972 T540 1032" stroke="#5a4a42" stroke-width="2.4" opacity="0.51"/>
      <path d="M673 274 Q425 274 280 378 T260 401" stroke="#4d3f39" stroke-width="1.8" opacity="0.50"/>
      <path d="M703 284 Q920 365 1031 680 T997 718" stroke="#6a574d" stroke-width="3.6" opacity="0.56"/>
      <path d="M700 297 Q1033 164 1098 306 T1072 332" stroke="#5a4a42" stroke-width="4.0" opacity="0.54"/>
      <path d="M741 253 Q947 174 1060 412 T1036 453" stroke="#0e0a0a" stroke-width="3.8" opacity="0.59"/>
      <path d="M676 263 Q591 477 564 929 T541 949" stroke="#5a4a42" stroke-width="3.5" opacity="0.49"/>
      <path d="M690 252 Q710 411 716 888 T731 935" stroke="#3d312d" stroke-width="2.3" opacity="0.52"/>
      <path d="M707 253 Q907 342 1012 541 T979 577" stroke="#6a574d" stroke-width="2.5" opacity="0.45"/>
      <path d="M710 261 Q948 415 998 742 T1017 782" stroke="#4d3f39" stroke-width="2.5" opacity="0.38"/>
      <path d="M692 259 Q863 504 918 834 T908 873" stroke="#6a574d" stroke-width="3.8" opacity="0.40"/>
      <path d="M694 245 Q878 528 920 914 T909 942" stroke="#0e0a0a" stroke-width="3.4" opacity="0.49"/>
      <path d="M673 197 Q389 219 217 443 T215 486" stroke="#5a4a42" stroke-width="1.4" opacity="0.59"/>
      <path d="M629 264 Q398 259 259 446 T251 489" stroke="#120d0d" stroke-width="1.9" opacity="0.32"/>
      <path d="M692 188 Q818 414 848 869 T867 892" stroke="#0e0a0a" stroke-width="3.6" opacity="0.42"/>
      <path d="M635 223 Q317 236 251 356 T244 394" stroke="#4d3f39" stroke-width="4.1" opacity="0.36"/>
      <path d="M684 189 Q669 425 658 928 T637 958" stroke="#5a4a42" stroke-width="1.4" opacity="0.46"/>
      <path d="M720 277 Q927 288 1032 515 T1006 556" stroke="#0e0a0a" stroke-width="4.1" opacity="0.59"/>
      <path d="M702 268 Q761 461 786 861 T749 877" stroke="#120d0d" stroke-width="2.1" opacity="0.48"/>
      <path d="M672 210 Q361 238 301 425 T300 468" stroke="#5a4a42" stroke-width="3.9" opacity="0.45"/>
      <path d="M688 268 Q677 493 666 902 T665 930" stroke="#6a574d" stroke-width="2.5" opacity="0.29"/>
    </g></g>
    <!-- hair wisps -->
    <g fill="none" stroke="#2d2524" stroke-linecap="round" filter="url(#pf1)" opacity=".7">
      <path d="M247 540 Q212 600 196 655" stroke-width="3"/>
      <path d="M208 700 Q200 760 228 805" stroke-width="4"/>
      <path d="M250 850 Q225 872 192 878" stroke-width="5"/>
      <path d="M300 932 Q270 912 232 900" stroke-width="5"/>
      <path d="M1110 620 Q1142 660 1152 722" stroke-width="3"/>
      <path d="M1120 760 Q1150 800 1174 818" stroke-width="4"/>
      <path d="M1066 872 Q1100 854 1134 850" stroke-width="4"/>
      <path d="M640 160 Q700 146 764 178" stroke-width="3"/>
      <path d="M400 285 Q368 312 346 350" stroke-width="3"/>
      <path d="M1040 470 Q1078 520 1100 560" stroke-width="3"/>
    </g>
    <!-- neck & shoulders -->
    <path fill="url(#skinneck)" d="M560.0 990.0 C516.7 996.7 537.7 1018.0 530.0 1030.0 C522.3 1042.0 517.2 1050.3 514.0 1062.0 C510.8 1073.7 512.0 1088.3 511.0 1100.0 C510.0 1111.7 510.5 1121.2 508.0 1132.0 C505.5 1142.8 502.7 1155.5 496.0 1165.0 C489.3 1174.5 480.7 1181.8 468.0 1189.0 C455.3 1196.2 438.0 1202.8 420.0 1208.0 C402.0 1213.2 381.7 1215.0 360.0 1220.0 C338.3 1225.0 312.5 1233.5 290.0 1238.0 C267.5 1242.5 244.2 1244.5 225.0 1247.0 C205.8 1249.5 188.8 1250.0 175.0 1253.0 C161.2 1256.0 153.0 1260.8 142.0 1265.0 C131.0 1269.2 120.0 1272.0 109.0 1278.0 C98.0 1284.0 85.3 1291.3 76.0 1301.0 C66.7 1310.7 59.0 1326.2 53.0 1336.0 C47.0 1345.8 -166.2 1356.0 40.0 1360.0 C246.2 1364.0 1084.5 1364.0 1290.0 1360.0 C1495.5 1356.0 1279.7 1343.7 1273.0 1336.0 C1266.3 1328.3 1259.7 1321.3 1250.0 1314.0 C1240.3 1306.7 1228.3 1298.7 1215.0 1292.0 C1201.7 1285.3 1187.5 1279.8 1170.0 1274.0 C1152.5 1268.2 1132.3 1262.7 1110.0 1257.0 C1087.7 1251.3 1058.2 1244.7 1036.0 1240.0 C1013.8 1235.3 996.3 1235.2 977.0 1229.0 C957.7 1222.8 936.2 1213.3 920.0 1203.0 C903.8 1192.7 890.0 1177.5 880.0 1167.0 C870.0 1156.5 864.3 1149.5 860.0 1140.0 C855.7 1130.5 855.5 1123.7 854.0 1110.0 C852.5 1096.3 854.7 1071.7 851.0 1058.0 C847.3 1044.3 842.2 1039.3 832.0 1028.0 C821.8 1016.7 835.3 996.3 790.0 990.0 C744.7 983.7 603.3 983.3 560.0 990.0Z" filter="url(#pf3)"/>
    <g clip-path="url(#bodyclip)">
    <path d="M420 1208 Q360 1220 290 1238 Q225 1247 175 1253 Q130 1268 100 1284 Q70 1306 50 1340" stroke="#e4bba9" stroke-width="26" fill="none" filter="url(#pf12)" opacity=".8"/>
    <path d="M920 1203 Q977 1229 1036 1240 Q1110 1257 1170 1274 Q1215 1292 1250 1314 L1276 1340" stroke="#e4bba9" stroke-width="26" fill="none" filter="url(#pf12)" opacity=".8"/>
    <ellipse cx="680" cy="1070" rx="175" ry="42" fill="#dcb09f" filter="url(#pf25)" opacity=".7"/>
    <ellipse cx="560" cy="1120" rx="40" ry="80" fill="#e2b9a9" filter="url(#pf25)" opacity=".6"/>
    <ellipse cx="668" cy="1295" rx="330" ry="55" fill="#fbeae0" filter="url(#pf25)" opacity=".8"/>
    <path d="M540 1232 Q610 1250 662 1296" stroke="#e8c6b8" stroke-width="14" fill="none" filter="url(#pf12)" opacity=".6"/>
    <path d="M810 1232 Q740 1250 694 1296" stroke="#e8c6b8" stroke-width="14" fill="none" filter="url(#pf12)" opacity=".6"/>
    </g>
    <!-- ears -->
    <path fill="#edc4b5" d="M396 640 Q352 618 352 668 Q356 730 378 772 Q392 800 414 790 L424 700Z" filter="url(#pf3)"/>
    <path fill="#edc4b5" d="M944 640 Q986 618 988 668 Q984 730 968 772 Q954 798 932 790 L922 700Z" filter="url(#pf3)"/>
    <path d="M372 670 Q370 720 392 760" stroke="#dba892" stroke-width="8" fill="none" filter="url(#pf6)"/>
    <path d="M968 670 Q970 720 950 760" stroke="#dba892" stroke-width="8" fill="none" filter="url(#pf6)"/>
    <!-- sideburns over ears -->
    <path d="M350 600 L430 600 L428 660 Q424 700 410 722 Q396 704 384 690 Q372 664 366 640Z" fill="#2a2120" opacity=".85" filter="url(#pf6)"/>
    <path d="M990 600 L908 600 L910 660 Q914 700 928 722 Q942 704 954 690 Q966 664 972 640Z" fill="#2a2120" opacity=".85" filter="url(#pf6)"/>
    <path d="M386 690 Q396 720 412 740" stroke="#4a3a36" stroke-width="5" fill="none" filter="url(#pf3)" opacity=".6"/>
    <path d="M952 690 Q942 720 926 740" stroke="#4a3a36" stroke-width="5" fill="none" filter="url(#pf3)" opacity=".6"/>
    <!-- face -->
    <path fill="url(#facegr)" d="M416.0 636.0 C411.7 662.7 413.7 679.3 414.0 700.0 C414.3 720.7 416.0 741.7 418.0 760.0 C420.0 778.3 422.0 792.2 426.0 810.0 C430.0 827.8 436.0 850.7 442.0 867.0 C448.0 883.3 454.7 895.5 462.0 908.0 C469.3 920.5 476.7 930.7 486.0 942.0 C495.3 953.3 507.0 965.7 518.0 976.0 C529.0 986.3 540.3 996.0 552.0 1004.0 C563.7 1012.0 575.7 1018.7 588.0 1024.0 C600.3 1029.3 612.7 1033.2 626.0 1036.0 C639.3 1038.8 654.0 1040.8 668.0 1041.0 C682.0 1041.2 697.0 1039.0 710.0 1037.0 C723.0 1035.0 734.3 1032.2 746.0 1029.0 C757.7 1025.8 768.7 1022.3 780.0 1018.0 C791.3 1013.7 803.2 1009.0 814.0 1003.0 C824.8 997.0 836.0 990.5 845.0 982.0 C854.0 973.5 860.7 963.2 868.0 952.0 C875.3 940.8 883.0 929.0 889.0 915.0 C895.0 901.0 899.7 884.8 904.0 868.0 C908.3 851.2 911.7 833.7 915.0 814.0 C918.3 794.3 921.5 770.7 924.0 750.0 C926.5 729.3 924.5 709.0 930.0 690.0 C935.5 671.0 955.3 657.7 957.0 636.0 C958.7 614.3 949.5 586.0 940.0 560.0 C930.5 534.0 920.0 503.3 900.0 480.0 C880.0 456.7 853.3 435.0 820.0 420.0 C786.7 405.0 736.7 393.3 700.0 390.0 C663.3 386.7 633.3 390.0 600.0 400.0 C566.7 410.0 526.7 426.7 500.0 450.0 C473.3 473.3 454.0 509.0 440.0 540.0 C426.0 571.0 420.3 609.3 416.0 636.0Z" filter="url(#pf3)"/>
    <g>
    <!-- face side shadows -->
    <g clip-path="url(#faceclip)">    <path d="M424 640 Q418 760 446 866 Q486 950 556 1006" stroke="#e0b5a5" stroke-width="22" fill="none" filter="url(#pf12)" opacity=".8"/>
    <path d="M926 640 Q926 760 892 880 Q852 960 776 1014" stroke="#e0b5a5" stroke-width="22" fill="none" filter="url(#pf12)" opacity=".8"/></g>
    <!-- forehead shadow under bangs -->
    <path d="M440 560 Q520 500 668 480 Q820 495 905 570" stroke="#e4bcae" stroke-width="30" fill="none" filter="url(#pf12)" opacity=".8"/>
    <!-- blush -->
    <ellipse cx="506" cy="745" rx="72" ry="54" fill="#f4a6a6" filter="url(#pf25)" opacity=".62"/>
    <ellipse cx="842" cy="742" rx="72" ry="54" fill="#f4a6a6" filter="url(#pf25)" opacity=".62"/>
    <!-- eye shadows -->
    <ellipse cx="552" cy="630" rx="70" ry="30" fill="#efc3b4" filter="url(#pf12)" opacity=".8"/>
    <ellipse cx="802" cy="640" rx="76" ry="30" fill="#efc3b4" filter="url(#pf12)" opacity=".8"/>
    <!-- nose -->
    <ellipse cx="672" cy="782" rx="64" ry="18" fill="#e2ad9c" filter="url(#pf12)" opacity=".85"/>
    <path d="M610 768 Q602 790 622 796 Q648 798 672 806 Q700 798 724 796 Q744 790 736 766" stroke="#cf9482" stroke-width="6" fill="none" filter="url(#pf3)"/>
    <ellipse cx="640" cy="790" rx="12" ry="6" fill="#c98a78" filter="url(#pf3)" opacity=".8"/><ellipse cx="704" cy="790" rx="12" ry="6" fill="#c98a78" filter="url(#pf3)" opacity=".8"/>
    <ellipse cx="668" cy="748" rx="26" ry="32" fill="#fef3ec" filter="url(#pf12)" opacity=".9"/>
    <path d="M738 600 Q724 640 728 700" stroke="#e4b8a8" stroke-width="12" fill="none" filter="url(#pf12)" opacity=".8"/>
    <path d="M612 620 Q622 660 618 700" stroke="#ebc5b7" stroke-width="10" fill="none" filter="url(#pf12)" opacity=".7"/>
    <!-- smile lines -->
    <path d="M590 785 Q560 815 552 850" stroke="#e0ae9e" stroke-width="8" fill="none" filter="url(#pf6)" opacity=".75"/>
    <path d="M756 785 Q794 812 808 846" stroke="#e0ae9e" stroke-width="8" fill="none" filter="url(#pf6)" opacity=".75"/>
    <!-- lips -->
    <g filter="url(#pf2)">
    <path fill="#ee8f81" d="M559 851 Q600 846 640 848 Q668 852 700 847 Q750 844 801 849 Q772 888 722 902 Q676 911 628 900 Q584 884 559 851Z"/>
    <path fill="#de8377" d="M559 851 Q600 843 640 845 Q668 850 700 844 Q750 841 801 849 Q740 866 676 868 Q610 866 559 851Z"/>
    <path d="M562 852 Q620 870 676 870 Q740 868 799 850" stroke="#c0605a" stroke-width="3" fill="none"/>
    </g>
    <ellipse cx="700" cy="886" rx="46" ry="7" fill="#f6bcb4" filter="url(#pf3)" opacity=".85"/>
    <ellipse cx="676" cy="932" rx="60" ry="14" fill="#e3b6a7" filter="url(#pf12)" opacity=".75"/>
    </g>
    <!-- eyebrows -->
    <g filter="url(#pf3)" fill="#94796f" opacity=".92">
      <path d="M460 592 Q486 556 530 548 Q580 548 624 574 Q628 582 618 582 Q580 566 534 566 Q495 570 460 592Z"/>
      <path d="M726 590 Q756 572 800 566 Q848 568 880 598 Q846 586 806 584 Q766 584 726 590Z"/>
    </g>
    <!-- left eye -->
    <g filter="url(#pf1)">
      <path d="M496 647 Q520 624 556 621 Q588 625 606 654 Q580 663 548 662 Q520 659 496 647Z" fill="#f3e4df"/>
      <g clip-path="url(#eyeclip)"><circle cx="555" cy="640" r="21.5" fill="#55302a"/><circle cx="555" cy="640" r="10.5" fill="#1a100f"/></g>
      <circle cx="561" cy="634" r="3.8" fill="#fff"/>
      <path d="M491 649 Q516 620 556 616 Q592 620 609 655" stroke="#3a2622" stroke-width="4.4" fill="none" stroke-linecap="round"/>
      <path d="M504 653 Q548 670 603 657" stroke="#c4968a" stroke-width="2.2" fill="none"/>
      <g stroke="#4a3632" stroke-width="1.3" stroke-linecap="round" fill="none" opacity=".8"><path d="M497 642 L489 635"/><path d="M505 633 L498 624"/><path d="M515 626 L510 616"/><path d="M528 620 L525 610"/><path d="M542 617 L541 607"/><path d="M557 616 L559 607"/><path d="M571 618 L575 610"/></g>
    </g>
    <path d="M488 624 Q518 598 560 597 Q596 601 618 630" stroke="#e0b1a2" stroke-width="4" fill="none" filter="url(#pf3)"/>
    <!-- right eye (wink) -->
    <g filter="url(#pf1)" fill="none" stroke-linecap="round">
      <path d="M742 664 Q790 650 846 662" stroke="#e3b3a6" stroke-width="10" opacity=".6"/>
      <path d="M735 661 Q742 651 764 648 Q800 642 828 650 Q840 654 849 658" stroke="#4a2c26" stroke-width="4.2"/>
      <path d="M849 658 Q860 654 872 647" stroke="#a9786a" stroke-width="2.4"/>
      <path d="M744 652 Q790 636 842 646" stroke="#d9a597" stroke-width="2.6"/>
      <path d="M748 676 Q800 684 850 674" stroke="#e0b1a2" stroke-width="3"/>
      <g stroke="#5a3a32" stroke-width="1.3" opacity=".75"><path d="M770 649 L767 657"/><path d="M782 647 L780 656"/><path d="M794 646 L794 656"/><path d="M806 647 L808 657"/><path d="M818 649 L821 659"/><path d="M829 652 L833 661"/><path d="M838 655 L843 664"/></g>
    </g>
    <!-- bangs / front hair -->
    <path fill="#1f1918" d="M668.0 190.0 C633.0 190.0 593.0 193.3 560.0 210.0 C527.0 226.7 498.3 258.3 470.0 290.0 C441.7 321.7 410.8 361.7 390.0 400.0 C369.2 438.3 354.2 486.7 345.0 520.0 C335.8 553.3 333.8 578.3 335.0 600.0 C336.2 621.7 342.5 640.0 352.0 650.0 C361.5 660.0 381.3 662.3 392.0 660.0 C402.7 657.7 409.5 650.2 416.0 636.0 C422.5 621.8 424.8 592.3 431.0 575.0 C437.2 557.7 445.8 542.7 453.0 532.0 C460.2 521.3 466.2 516.3 474.0 511.0 C481.8 505.7 492.2 502.3 500.0 500.0 C507.8 497.7 515.0 500.3 521.0 497.0 C527.0 493.7 530.2 487.0 536.0 480.0 C541.8 473.0 549.5 462.0 556.0 455.0 C562.5 448.0 569.3 442.5 575.0 438.0 C580.7 433.5 589.5 425.0 590.0 428.0 C590.5 431.0 583.7 446.0 578.0 456.0 C572.3 466.0 561.5 482.0 556.0 488.0 C550.5 494.0 541.8 495.0 545.0 492.0 C548.2 489.0 565.8 478.7 575.0 470.0 C584.2 461.3 593.2 448.3 600.0 440.0 C606.8 431.7 614.0 419.0 616.0 420.0 C618.0 421.0 613.7 437.5 612.0 446.0 C610.3 454.5 603.8 470.3 606.0 471.0 C608.2 471.7 619.3 457.7 625.0 450.0 C630.7 442.3 634.2 433.3 640.0 425.0 C645.8 416.7 650.5 408.8 660.0 400.0 C669.5 391.2 687.0 378.3 697.0 372.0 C707.0 365.7 713.7 357.3 720.0 362.0 C726.3 366.7 731.2 385.8 735.0 400.0 C738.8 414.2 737.2 435.3 743.0 447.0 C748.8 458.7 759.7 463.8 770.0 470.0 C780.3 476.2 801.7 486.5 805.0 484.0 C808.3 481.5 793.8 464.0 790.0 455.0 C786.2 446.0 777.0 427.5 782.0 430.0 C787.0 432.5 813.7 460.3 820.0 470.0 C826.3 479.7 813.0 481.0 820.0 488.0 C827.0 495.0 850.3 502.5 862.0 512.0 C873.7 521.5 881.0 532.0 890.0 545.0 C899.0 558.0 908.0 574.8 916.0 590.0 C924.0 605.2 930.7 623.7 938.0 636.0 C945.3 648.3 949.7 663.3 960.0 664.0 C970.3 664.7 991.7 657.3 1000.0 640.0 C1008.3 622.7 1011.7 588.3 1010.0 560.0 C1008.3 531.7 1001.7 501.7 990.0 470.0 C978.3 438.3 961.7 401.7 940.0 370.0 C918.3 338.3 888.3 306.7 860.0 280.0 C831.7 253.3 802.0 225.0 770.0 210.0 C738.0 195.0 703.0 190.0 668.0 190.0Z" filter="url(#pf3)"/>
    <g fill="none" stroke="#221b1a" stroke-linecap="round" filter="url(#pf2)" opacity=".8">
      <path d="M640 400 Q615 450 598 488" stroke-width="11"/>
      <path d="M668 380 Q652 430 644 474" stroke-width="6"/>
      <path d="M690 372 Q672 430 662 484" stroke-width="5"/>
      <path d="M706 372 Q698 420 692 456" stroke-width="5"/>
      <path d="M722 372 Q724 420 734 452" stroke-width="5"/>
      <path d="M730 380 Q750 440 770 478" stroke-width="7"/>
      <path d="M590 430 Q562 470 538 498" stroke-width="8"/>
      <path d="M612 420 Q590 462 572 492" stroke-width="6"/>
      <path d="M800 440 Q830 480 848 512" stroke-width="6"/>
      <path d="M626 436 Q616 466 612 486" stroke-width="5"/>
      <path d="M560 455 Q548 478 530 498" stroke-width="6"/>
    </g>
    <path d="M540 496 Q590 430 640 410 Q690 360 740 372 Q760 440 808 486 L770 480 Q750 456 720 440 Q700 470 690 480 Q670 486 660 486 Q640 470 630 450 Q612 480 600 492Z" fill="#2a201e" opacity=".55" filter="url(#pf6)"/>
    <g clip-path="url(#bangclip)"><g fill="none" stroke-linecap="round" filter="url(#pf1)">
      <path d="M678 274 Q584 289 563 461" stroke="#3d312d" stroke-width="2.8" opacity="0.26"/>
      <path d="M676 333 Q611 358 597 488" stroke="#4d3f39" stroke-width="2.6" opacity="0.25"/>
      <path d="M688 335 Q738 351 739 464" stroke="#100c0c" stroke-width="2.7" opacity="0.27"/>
      <path d="M661 217 Q509 303 486 474" stroke="#6a574d" stroke-width="2.6" opacity="0.44"/>
      <path d="M676 213 Q608 296 592 466" stroke="#4d3f39" stroke-width="1.8" opacity="0.35"/>
      <path d="M705 310 Q848 358 858 472" stroke="#100c0c" stroke-width="2.7" opacity="0.29"/>
      <path d="M674 300 Q604 314 590 454" stroke="#6a574d" stroke-width="3.2" opacity="0.38"/>
      <path d="M699 338 Q775 358 775 491" stroke="#6a574d" stroke-width="3.0" opacity="0.48"/>
      <path d="M693 312 Q791 320 798 487" stroke="#3d312d" stroke-width="3.5" opacity="0.45"/>
      <path d="M685 216 Q707 295 703 502" stroke="#5a4a42" stroke-width="3.4" opacity="0.28"/>
      <path d="M669 220 Q580 284 564 458" stroke="#6a574d" stroke-width="3.4" opacity="0.31"/>
      <path d="M694 269 Q802 312 811 473" stroke="#5a4a42" stroke-width="2.5" opacity="0.48"/>
      <path d="M670 202 Q594 255 579 465" stroke="#6a574d" stroke-width="2.8" opacity="0.42"/>
      <path d="M705 250 Q871 323 885 495" stroke="#5a4a42" stroke-width="2.9" opacity="0.44"/>
      <path d="M681 258 Q619 330 603 492" stroke="#5a4a42" stroke-width="1.8" opacity="0.38"/>
      <path d="M694 278 Q762 315 763 470" stroke="#100c0c" stroke-width="1.8" opacity="0.28"/>
      <path d="M680 319 Q590 335 570 477" stroke="#5a4a42" stroke-width="2.0" opacity="0.38"/>
      <path d="M703 250 Q930 320 955 567" stroke="#100c0c" stroke-width="3.3" opacity="0.35"/>
      <path d="M673 227 Q522 297 493 467" stroke="#3d312d" stroke-width="1.5" opacity="0.43"/>
      <path d="M693 337 Q856 313 874 455" stroke="#3d312d" stroke-width="2.8" opacity="0.33"/>
      <path d="M670 268 Q486 315 452 484" stroke="#5a4a42" stroke-width="3.3" opacity="0.50"/>
      <path d="M685 218 Q717 259 716 451" stroke="#100c0c" stroke-width="2.9" opacity="0.48"/>
      <path d="M663 208 Q550 305 532 491" stroke="#3d312d" stroke-width="2.3" opacity="0.35"/>
      <path d="M673 290 Q542 359 516 498" stroke="#100c0c" stroke-width="2.5" opacity="0.53"/>
      <path d="M697 210 Q763 306 762 477" stroke="#3d312d" stroke-width="3.6" opacity="0.36"/>
      <path d="M660 333 Q482 369 454 483" stroke="#100c0c" stroke-width="3.4" opacity="0.41"/>
      <path d="M682 295 Q658 302 648 480" stroke="#4d3f39" stroke-width="3.3" opacity="0.38"/>
      <path d="M683 211 Q680 293 673 503" stroke="#3d312d" stroke-width="1.5" opacity="0.33"/>
      <path d="M675 238 Q540 328 513 497" stroke="#4d3f39" stroke-width="2.2" opacity="0.43"/>
      <path d="M702 340 Q856 360 869 461" stroke="#5a4a42" stroke-width="3.0" opacity="0.54"/>
      <path d="M646 216 Q440 355 413 559" stroke="#100c0c" stroke-width="3.2" opacity="0.41"/>
      <path d="M690 306 Q717 298 713 444" stroke="#5a4a42" stroke-width="3.5" opacity="0.37"/>
      <path d="M681 249 Q607 288 589 457" stroke="#3d312d" stroke-width="2.5" opacity="0.41"/>
      <path d="M671 291 Q602 329 589 453" stroke="#5a4a42" stroke-width="2.3" opacity="0.49"/>
      <path d="M673 233 Q589 308 573 474" stroke="#5a4a42" stroke-width="3.3" opacity="0.34"/>
      <path d="M653 271 Q442 354 411 526" stroke="#100c0c" stroke-width="1.4" opacity="0.32"/>
      <path d="M659 258 Q526 276 507 463" stroke="#6a574d" stroke-width="3.6" opacity="0.55"/>
      <path d="M681 294 Q656 289 646 453" stroke="#4d3f39" stroke-width="2.5" opacity="0.39"/>
      <path d="M701 202 Q854 238 867 444" stroke="#5a4a42" stroke-width="1.5" opacity="0.30"/>
      <path d="M684 232 Q673 262 665 449" stroke="#4d3f39" stroke-width="2.0" opacity="0.31"/>
      <path d="M654 295 Q491 344 468 508" stroke="#4d3f39" stroke-width="2.1" opacity="0.53"/>
      <path d="M653 322 Q496 368 475 490" stroke="#100c0c" stroke-width="2.0" opacity="0.29"/>
      <path d="M686 276 Q707 288 704 474" stroke="#5a4a42" stroke-width="1.4" opacity="0.25"/>
      <path d="M720 337 Q924 341 938 521" stroke="#4d3f39" stroke-width="2.7" opacity="0.34"/>
      <path d="M699 336 Q846 358 859 495" stroke="#6a574d" stroke-width="1.7" opacity="0.54"/>
      <path d="M661 307 Q421 400 381 573" stroke="#5a4a42" stroke-width="3.0" opacity="0.54"/>
      <path d="M642 259 Q426 383 398 570" stroke="#5a4a42" stroke-width="2.0" opacity="0.34"/>
      <path d="M655 236 Q435 334 401 567" stroke="#3d312d" stroke-width="2.0" opacity="0.29"/>
      <path d="M688 286 Q731 284 730 457" stroke="#100c0c" stroke-width="2.4" opacity="0.51"/>
      <path d="M705 223 Q904 318 924 494" stroke="#5a4a42" stroke-width="2.9" opacity="0.42"/>
      <path d="M680 298 Q639 360 626 481" stroke="#4d3f39" stroke-width="2.4" opacity="0.40"/>
      <path d="M704 272 Q899 357 919 534" stroke="#100c0c" stroke-width="2.6" opacity="0.39"/>
      <path d="M662 270 Q470 359 438 542" stroke="#4d3f39" stroke-width="2.3" opacity="0.33"/>
      <path d="M662 282 Q435 346 397 546" stroke="#3d312d" stroke-width="1.4" opacity="0.42"/>
      <path d="M708 269 Q920 358 941 569" stroke="#5a4a42" stroke-width="2.0" opacity="0.44"/>
      <path d="M692 262 Q791 311 799 448" stroke="#3d312d" stroke-width="3.0" opacity="0.49"/>
      <path d="M707 225 Q846 248 855 441" stroke="#100c0c" stroke-width="1.3" opacity="0.45"/>
      <path d="M682 290 Q668 314 660 501" stroke="#5a4a42" stroke-width="3.5" opacity="0.28"/>
      <path d="M704 322 Q934 387 960 603" stroke="#100c0c" stroke-width="3.6" opacity="0.44"/>
      <path d="M697 294 Q817 305 827 466" stroke="#3d312d" stroke-width="1.2" opacity="0.53"/>
      <path d="M691 269 Q757 316 759 441" stroke="#5a4a42" stroke-width="3.1" opacity="0.32"/>
      <path d="M688 216 Q747 272 749 470" stroke="#3d312d" stroke-width="1.3" opacity="0.46"/>
      <path d="M722 246 Q941 308 958 543" stroke="#6a574d" stroke-width="2.7" opacity="0.48"/>
      <path d="M675 239 Q596 259 580 442" stroke="#6a574d" stroke-width="2.5" opacity="0.48"/>
      <path d="M686 240 Q697 300 692 468" stroke="#3d312d" stroke-width="2.0" opacity="0.34"/>
      <path d="M705 320 Q873 334 887 504" stroke="#4d3f39" stroke-width="3.4" opacity="0.29"/>
      <path d="M679 296 Q651 303 641 482" stroke="#3d312d" stroke-width="3.4" opacity="0.43"/>
      <path d="M682 202 Q636 286 622 504" stroke="#3d312d" stroke-width="1.6" opacity="0.49"/>
      <path d="M687 331 Q739 353 740 443" stroke="#4d3f39" stroke-width="1.3" opacity="0.54"/>
      <path d="M658 235 Q519 277 498 434" stroke="#5a4a42" stroke-width="2.7" opacity="0.55"/>
    </g></g>
    <!-- hair highlights -->
    <g fill="none" stroke="#5a4a44" stroke-linecap="round" filter="url(#pf12)" opacity=".42">
      <path d="M470 330 Q420 420 400 520" stroke-width="14"/>
      <path d="M560 270 Q510 350 490 440" stroke-width="12"/>
      <path d="M880 330 Q940 420 962 520" stroke-width="14"/>
      <path d="M780 262 Q836 340 860 430" stroke-width="12"/>
      <path d="M296 560 Q262 680 296 800" stroke-width="14"/>
      <path d="M1052 560 Q1086 680 1064 800" stroke-width="14"/>
      <path d="M330 850 Q380 930 450 1000" stroke-width="12"/>
      <path d="M1030 850 Q980 930 910 1000" stroke-width="12"/>
      <path d="M620 200 Q560 260 520 330" stroke-width="10"/>
      <path d="M720 205 Q800 250 850 320" stroke-width="10"/>
    </g>
    <!-- earrings -->
    <g filter="url(#pf1)">
      <ellipse cx="407" cy="814" rx="22" ry="29" fill="#84c27a"/>
      <path d="M352 872 Q354 846 380 850 Q396 852 404 864 Q412 852 430 850 Q454 848 452 874 Q450 896 428 898 L378 898 Q354 894 352 872Z" fill="#8ccaf0"/>
      <path d="M368 880 Q370 862 384 866 L392 886Z M440 882 Q438 864 424 866 L416 888Z" fill="#f6b4c8"/>
      <path d="M358 918 Q358 890 400 886 Q444 890 443 920 Q440 948 400 951 Q360 948 358 918Z" fill="#f8e18c"/>
      <ellipse cx="378" cy="925" rx="8" ry="6" fill="#f6a8b8"/><ellipse cx="424" cy="925" rx="8" ry="6" fill="#f6a8b8"/>
      <circle cx="390" cy="914" r="2.6" fill="#3a2a20"/><circle cx="412" cy="914" r="2.6" fill="#3a2a20"/>
      <path d="M396 921 Q401 926 406 921" stroke="#3a2a20" stroke-width="1.8" fill="none"/>
      <ellipse cx="953" cy="814" rx="21" ry="29" fill="#73b06c"/>
      <path d="M910 878 Q910 852 934 854 Q950 856 958 866 Q966 852 986 850 Q1008 852 1006 876 Q1002 898 982 900 L934 902 Q912 898 910 878Z" fill="#86c2ee"/>
      <path d="M924 884 Q926 866 940 870 L946 890Z M994 880 Q992 862 978 866 L972 888Z" fill="#f6b0c6"/>
      <path d="M924 922 Q924 892 962 888 Q1000 892 1000 922 Q998 950 962 953 Q926 950 924 922Z" fill="#f8e08a"/>
      <ellipse cx="942" cy="928" rx="8" ry="6" fill="#f6a8b8"/><ellipse cx="984" cy="926" rx="8" ry="6" fill="#f6a8b8"/>
      <circle cx="952" cy="916" r="2.8" fill="#3a2a20"/><circle cx="974" cy="915" r="2.8" fill="#3a2a20"/>
      <path d="M959 923 Q963 927 967 923" stroke="#3a2a20" stroke-width="1.8" fill="none"/>
    </g>
  </g>
  </symbol>
</defs>
</svg>
<svg class="abs" style="left:440px;top:184px" width="1336" height="1336" viewBox="0 0 1336 1336"><use href="#portrait" width="1336" height="1336"/></svg>
<div class="t" style="left:1662px;top:1480px;font-size:18px;font-weight:700;color:#fff;text-shadow:0 0 2px rgba(0,0,0,.25)">豆包AI生成</div>

<!-- thumbnail -->
<div class="abs" style="left:24px;top:1613px;width:140px;height:140px;background:#0a84ff"></div>
<svg class="abs" style="left:28px;top:1617px" width="132" height="132" viewBox="0 0 1336 1336"><use href="#portrait" width="1336" height="1336"/></svg>
<div class="btn" style="left:34px;top:1703px;width:40px;height:40px;border-radius:50%;background:#3a3a3a;font-size:23px;font-weight:700;font-family:NanumGothic,'Liberation Sans',sans-serif;color:#fff;padding-right:1px">1</div>
</body>
</html>
